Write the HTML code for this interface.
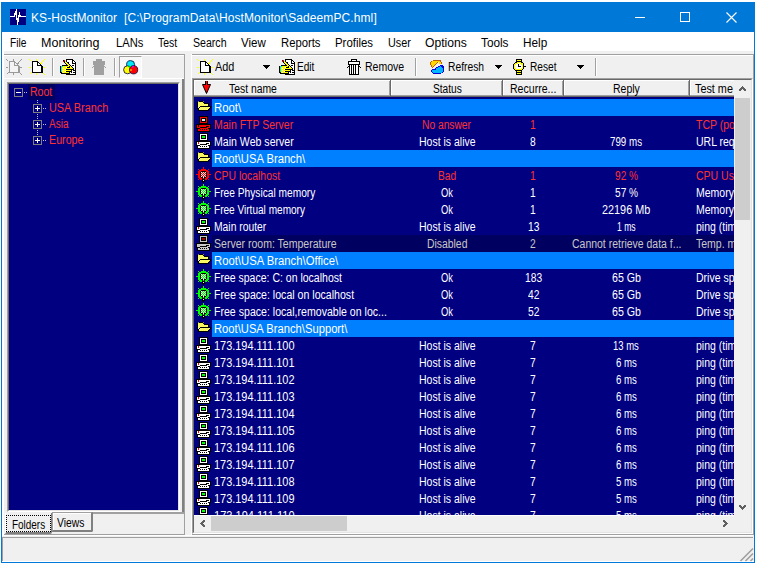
<!DOCTYPE html><html><head><meta charset="utf-8"><style>
*{margin:0;padding:0;box-sizing:border-box}
html,body{width:757px;height:565px;overflow:hidden;background:#fff;font-family:"Liberation Sans",sans-serif;position:relative}
.a{position:absolute}
.tx{position:absolute;white-space:pre;transform-origin:0 0;line-height:1}
svg{position:absolute;display:block}
</style></head><body>
<div class="a" style="left:1px;top:2px;width:754px;height:561px;background:#0078D7;"></div>
<div class="a" style="left:2px;top:32px;width:752px;height:530px;background:#F0F0F0;"></div>
<div class="a" style="left:2px;top:32px;width:752px;height:19px;background:#FFFFFF;"></div>
<svg style="left:10px;top:9px" width="16" height="16" viewBox="0 0 16 16" shape-rendering="crispEdges"><rect width="16" height="16" fill="#000080"/><g fill="#fff"><rect x="0" y="7" width="5" height="1"/><rect x="4" y="4" width="1" height="4"/><rect x="5" y="2" width="1" height="4"/><rect x="6" y="0" width="1" height="11"/><rect x="7" y="9" width="1" height="7"/><rect x="8" y="6" width="1" height="7"/><rect x="9" y="3" width="1" height="5"/><rect x="10" y="6" width="1" height="2"/><rect x="11" y="7" width="5" height="1"/></g></svg>
<div class="tx" style="left:31px;top:12px;font-size:12px;color:#fff;letter-spacing:0.1px">KS-HostMonitor  [C:\ProgramData\HostMonitor\SadeemPC.hml]</div>
<div class="a" style="left:635px;top:17px;width:10px;height:1px;background:#fff;"></div>
<div class="a" style="left:680px;top:12px;width:10px;height:10px;border:1px solid #fff"></div>
<svg style="left:726px;top:12px" width="11" height="11" viewBox="0 0 11 11"><path d="M0.5 0.5L10.5 10.5M10.5 0.5L0.5 10.5" stroke="#fff" stroke-width="1.1"/></svg>
<div class="tx" style="left:10.0px;top:37px;font-size:12px;color:#000;transform:scaleX(0.85);">File</div>
<div class="tx" style="left:41.0px;top:37px;font-size:12px;color:#000;transform:scaleX(1.045);">Monitoring</div>
<div class="tx" style="left:116.0px;top:37px;font-size:12px;color:#000;transform:scaleX(0.931);">LANs</div>
<div class="tx" style="left:158.0px;top:37px;font-size:12px;color:#000;transform:scaleX(0.87);">Test</div>
<div class="tx" style="left:192.5px;top:37px;font-size:12px;color:#000;transform:scaleX(0.882);">Search</div>
<div class="tx" style="left:241.0px;top:37px;font-size:12px;color:#000;transform:scaleX(0.962);">View</div>
<div class="tx" style="left:280.5px;top:37px;font-size:12px;color:#000;transform:scaleX(0.94);">Reports</div>
<div class="tx" style="left:335.0px;top:37px;font-size:12px;color:#000;transform:scaleX(0.95);">Profiles</div>
<div class="tx" style="left:387.5px;top:37px;font-size:12px;color:#000;transform:scaleX(0.9);">User</div>
<div class="tx" style="left:424.5px;top:37px;font-size:12px;color:#000;transform:scaleX(1.012);">Options</div>
<div class="tx" style="left:480.5px;top:37px;font-size:12px;color:#000;transform:scaleX(0.982);">Tools</div>
<div class="tx" style="left:522.5px;top:37px;font-size:12px;color:#000;transform:scaleX(0.98);">Help</div>
<div class="a" style="left:3px;top:51px;width:751px;height:3px;background:#F0F0F0;"></div>
<div class="a" style="left:3px;top:54px;width:182px;height:1px;background:#A0A0A0;"></div>
<div class="a" style="left:3px;top:55px;width:181px;height:1px;background:#FFFFFF;"></div>
<div class="a" style="left:184px;top:54px;width:1px;height:481px;background:#A0A0A0;"></div>
<div class="a" style="left:192px;top:54px;width:562px;height:1px;background:#A0A0A0;"></div>
<div class="a" style="left:192px;top:55px;width:562px;height:1px;background:#FFFFFF;"></div>
<div class="a" style="left:191px;top:54px;width:1px;height:481px;background:#FFFFFF;"></div>
<div class="a" style="left:3px;top:78px;width:181px;height:1px;background:#FFFFFF;"></div>
<div class="a" style="left:182px;top:79px;width:2px;height:435px;background:#808080;"></div>
<div class="a" style="left:92px;top:512px;width:92px;height:2px;background:#A0A0A0;"></div>
<div class="a" style="left:3px;top:534px;width:182px;height:1px;background:#A0A0A0;"></div>
<div class="a" style="left:7px;top:82px;width:173px;height:430px;background:#000080;border-top:1px solid #A0A0A0;border-left:1px solid #A0A0A0;border-right:1px solid #FFF;border-bottom:1px solid #FFF"></div>
<div class="a" style="left:8px;top:83px;width:171px;height:428px;background:#000080;border-top:1px solid #696969;border-left:1px solid #696969;border-right:1px solid #E3E3E3;border-bottom:1px solid #E3E3E3"></div>
<div class="a" style="left:192px;top:78px;width:561px;height:456px;background:#F0F0F0;border-top:1px solid #A0A0A0;border-left:1px solid #A0A0A0;border-right:1px solid #FFF;border-bottom:1px solid #FFF"></div>
<div class="a" style="left:193px;top:79px;width:559px;height:454px;background:#F0F0F0;border-top:1px solid #696969;border-left:1px solid #696969;border-right:1px solid #E3E3E3;border-bottom:1px solid #E3E3E3"></div>
<div class="a" style="left:194px;top:96px;width:540px;height:419px;background:#000080;"></div>
<div class="a" style="left:2px;top:537px;width:751px;height:1px;background:#A0A0A0;"></div>
<div class="a" style="left:2px;top:51px;width:2px;height:484px;background:#FFFFFF;"></div>
<div class="a" style="left:2px;top:535px;width:751px;height:1px;background:#FFFFFF;"></div>
<div class="a" style="left:2px;top:537px;width:1px;height:24px;background:#A0A0A0;"></div>
<div class="a" style="left:2px;top:561px;width:752px;height:1px;background:#FFFFFF;"></div>
<div class="a" style="left:192px;top:534px;width:562px;height:1px;background:#A0A0A0;"></div>
<div class="a" style="left:753px;top:54px;width:1px;height:481px;background:#A0A0A0;"></div>
<svg style="left:6px;top:59px;" width="16" height="16" viewBox="0 0 16 16" shape-rendering="crispEdges"><rect x="0" y="0" width="1" height="1" fill="#9A9A9A"/><rect x="7" y="0" width="1" height="1" fill="#9A9A9A"/><rect x="15" y="0" width="1" height="1" fill="#9A9A9A"/><rect x="1" y="1" width="1" height="1" fill="#9A9A9A"/><rect x="7" y="1" width="1" height="1" fill="#9A9A9A"/><rect x="14" y="1" width="1" height="1" fill="#9A9A9A"/><rect x="3" y="2" width="6" height="1" fill="#9A9A9A"/><rect x="13" y="2" width="1" height="1" fill="#9A9A9A"/><rect x="3" y="3" width="1" height="1" fill="#9A9A9A"/><rect x="4" y="3" width="4" height="1" fill="#F4F4F4"/><rect x="8" y="3" width="2" height="1" fill="#9A9A9A"/><rect x="12" y="3" width="1" height="1" fill="#9A9A9A"/><rect x="3" y="4" width="1" height="1" fill="#9A9A9A"/><rect x="4" y="4" width="4" height="1" fill="#F4F4F4"/><rect x="8" y="4" width="1" height="1" fill="#9A9A9A"/><rect x="9" y="4" width="1" height="1" fill="#F4F4F4"/><rect x="10" y="4" width="1" height="1" fill="#9A9A9A"/><rect x="11" y="4" width="2" height="1" fill="#9A9A9A"/><rect x="3" y="5" width="1" height="1" fill="#9A9A9A"/><rect x="4" y="5" width="4" height="1" fill="#F4F4F4"/><rect x="8" y="5" width="1" height="1" fill="#9A9A9A"/><rect x="9" y="5" width="2" height="1" fill="#F4F4F4"/><rect x="11" y="5" width="1" height="1" fill="#9A9A9A"/><rect x="3" y="6" width="1" height="1" fill="#9A9A9A"/><rect x="4" y="6" width="4" height="1" fill="#F4F4F4"/><rect x="8" y="6" width="5" height="1" fill="#9A9A9A"/><rect x="3" y="7" width="1" height="1" fill="#9A9A9A"/><rect x="4" y="7" width="8" height="1" fill="#F4F4F4"/><rect x="12" y="7" width="2" height="1" fill="#9A9A9A"/><rect x="0" y="8" width="2" height="1" fill="#9A9A9A"/><rect x="3" y="8" width="1" height="1" fill="#9A9A9A"/><rect x="4" y="8" width="8" height="1" fill="#F4F4F4"/><rect x="12" y="8" width="2" height="1" fill="#9A9A9A"/><rect x="14" y="8" width="2" height="1" fill="#9A9A9A"/><rect x="3" y="9" width="1" height="1" fill="#9A9A9A"/><rect x="4" y="9" width="8" height="1" fill="#F4F4F4"/><rect x="12" y="9" width="2" height="1" fill="#9A9A9A"/><rect x="3" y="10" width="1" height="1" fill="#9A9A9A"/><rect x="4" y="10" width="8" height="1" fill="#F4F4F4"/><rect x="12" y="10" width="2" height="1" fill="#9A9A9A"/><rect x="3" y="11" width="1" height="1" fill="#9A9A9A"/><rect x="4" y="11" width="8" height="1" fill="#F4F4F4"/><rect x="12" y="11" width="2" height="1" fill="#9A9A9A"/><rect x="3" y="12" width="1" height="1" fill="#9A9A9A"/><rect x="4" y="12" width="8" height="1" fill="#F4F4F4"/><rect x="12" y="12" width="2" height="1" fill="#9A9A9A"/><rect x="2" y="13" width="1" height="1" fill="#9A9A9A"/><rect x="3" y="13" width="11" height="1" fill="#9A9A9A"/><rect x="1" y="14" width="1" height="1" fill="#9A9A9A"/><rect x="7" y="14" width="1" height="1" fill="#9A9A9A"/><rect x="14" y="14" width="1" height="1" fill="#9A9A9A"/><rect x="7" y="15" width="1" height="1" fill="#9A9A9A"/><rect x="15" y="15" width="1" height="1" fill="#9A9A9A"/></svg>
<svg style="left:29px;top:59px;" width="16" height="16" viewBox="0 0 16 16" shape-rendering="crispEdges"><rect x="0" y="0" width="1" height="1" fill="#FFFF00"/><rect x="7" y="0" width="1" height="1" fill="#FFFF00"/><rect x="15" y="0" width="1" height="1" fill="#FFFF00"/><rect x="1" y="1" width="1" height="1" fill="#FFFF00"/><rect x="7" y="1" width="1" height="1" fill="#FFFF00"/><rect x="14" y="1" width="1" height="1" fill="#FFFF00"/><rect x="3" y="2" width="6" height="1" fill="#000"/><rect x="13" y="2" width="1" height="1" fill="#FFFF00"/><rect x="3" y="3" width="1" height="1" fill="#000"/><rect x="4" y="3" width="4" height="1" fill="#fff"/><rect x="8" y="3" width="2" height="1" fill="#000"/><rect x="12" y="3" width="1" height="1" fill="#FFFF00"/><rect x="3" y="4" width="1" height="1" fill="#000"/><rect x="4" y="4" width="4" height="1" fill="#fff"/><rect x="8" y="4" width="1" height="1" fill="#000"/><rect x="9" y="4" width="1" height="1" fill="#fff"/><rect x="10" y="4" width="1" height="1" fill="#000"/><rect x="11" y="4" width="2" height="1" fill="#FFFF00"/><rect x="3" y="5" width="1" height="1" fill="#000"/><rect x="4" y="5" width="4" height="1" fill="#fff"/><rect x="8" y="5" width="1" height="1" fill="#000"/><rect x="9" y="5" width="2" height="1" fill="#fff"/><rect x="11" y="5" width="1" height="1" fill="#000"/><rect x="3" y="6" width="1" height="1" fill="#000"/><rect x="4" y="6" width="4" height="1" fill="#fff"/><rect x="8" y="6" width="5" height="1" fill="#000"/><rect x="3" y="7" width="1" height="1" fill="#000"/><rect x="4" y="7" width="8" height="1" fill="#fff"/><rect x="12" y="7" width="2" height="1" fill="#000"/><rect x="0" y="8" width="2" height="1" fill="#FFFF00"/><rect x="3" y="8" width="1" height="1" fill="#000"/><rect x="4" y="8" width="8" height="1" fill="#fff"/><rect x="12" y="8" width="2" height="1" fill="#000"/><rect x="14" y="8" width="2" height="1" fill="#FFFF00"/><rect x="3" y="9" width="1" height="1" fill="#000"/><rect x="4" y="9" width="8" height="1" fill="#fff"/><rect x="12" y="9" width="2" height="1" fill="#000"/><rect x="3" y="10" width="1" height="1" fill="#000"/><rect x="4" y="10" width="8" height="1" fill="#fff"/><rect x="12" y="10" width="2" height="1" fill="#000"/><rect x="3" y="11" width="1" height="1" fill="#000"/><rect x="4" y="11" width="8" height="1" fill="#fff"/><rect x="12" y="11" width="2" height="1" fill="#000"/><rect x="3" y="12" width="1" height="1" fill="#000"/><rect x="4" y="12" width="8" height="1" fill="#fff"/><rect x="12" y="12" width="2" height="1" fill="#000"/><rect x="2" y="13" width="1" height="1" fill="#FFFF00"/><rect x="3" y="13" width="11" height="1" fill="#000"/><rect x="1" y="14" width="1" height="1" fill="#FFFF00"/><rect x="7" y="14" width="1" height="1" fill="#FFFF00"/><rect x="14" y="14" width="1" height="1" fill="#FFFF00"/><rect x="7" y="15" width="1" height="1" fill="#FFFF00"/><rect x="15" y="15" width="1" height="1" fill="#FFFF00"/></svg>
<div class="a" style="left:52px;top:58px;width:1px;height:18px;background:#A0A0A0;"></div>
<div class="a" style="left:53px;top:58px;width:1px;height:18px;background:#FFFFFF;"></div>
<svg style="left:60px;top:59px;" width="17" height="16" viewBox="0 0 17 16" shape-rendering="crispEdges"><rect x="6" y="0" width="7" height="1" fill="#000"/><rect x="3" y="1" width="1" height="1" fill="#000"/><rect x="4" y="1" width="1" height="1" fill="#FF0000"/><rect x="6" y="1" width="1" height="1" fill="#000"/><rect x="7" y="1" width="5" height="1" fill="#fff"/><rect x="12" y="1" width="2" height="1" fill="#000"/><rect x="3" y="2" width="1" height="1" fill="#FF0000"/><rect x="4" y="2" width="1" height="1" fill="#000"/><rect x="5" y="2" width="1" height="1" fill="#FFFF00"/><rect x="6" y="2" width="1" height="1" fill="#000"/><rect x="7" y="2" width="5" height="1" fill="#fff"/><rect x="12" y="2" width="1" height="1" fill="#000"/><rect x="13" y="2" width="1" height="1" fill="#fff"/><rect x="14" y="2" width="1" height="1" fill="#000"/><rect x="4" y="3" width="1" height="1" fill="#000"/><rect x="5" y="3" width="2" height="1" fill="#FFFF00"/><rect x="7" y="3" width="2" height="1" fill="#000"/><rect x="9" y="3" width="3" height="1" fill="#fff"/><rect x="12" y="3" width="1" height="1" fill="#000"/><rect x="13" y="3" width="2" height="1" fill="#fff"/><rect x="15" y="3" width="1" height="1" fill="#000"/><rect x="5" y="4" width="1" height="1" fill="#000"/><rect x="6" y="4" width="2" height="1" fill="#FFFF00"/><rect x="8" y="4" width="1" height="1" fill="#000"/><rect x="9" y="4" width="3" height="1" fill="#fff"/><rect x="12" y="4" width="4" height="1" fill="#000"/><rect x="6" y="5" width="1" height="1" fill="#000"/><rect x="7" y="5" width="2" height="1" fill="#FFFF00"/><rect x="9" y="5" width="1" height="1" fill="#000"/><rect x="10" y="5" width="5" height="1" fill="#fff"/><rect x="15" y="5" width="1" height="1" fill="#000"/><rect x="2" y="6" width="6" height="1" fill="#000"/><rect x="8" y="6" width="2" height="1" fill="#FFFF00"/><rect x="10" y="6" width="1" height="1" fill="#000"/><rect x="11" y="6" width="1" height="1" fill="#fff"/><rect x="12" y="6" width="2" height="1" fill="#000"/><rect x="14" y="6" width="1" height="1" fill="#fff"/><rect x="15" y="6" width="1" height="1" fill="#000"/><rect x="0" y="7" width="1" height="1" fill="#000"/><rect x="1" y="7" width="2" height="1" fill="#00E8F0"/><rect x="3" y="7" width="6" height="1" fill="#FFFF00"/><rect x="9" y="7" width="1" height="1" fill="#000"/><rect x="10" y="7" width="1" height="1" fill="#FFFF00"/><rect x="11" y="7" width="1" height="1" fill="#000"/><rect x="12" y="7" width="3" height="1" fill="#fff"/><rect x="15" y="7" width="1" height="1" fill="#000"/><rect x="0" y="8" width="1" height="1" fill="#000"/><rect x="1" y="8" width="1" height="1" fill="#00E8F0"/><rect x="2" y="8" width="4" height="1" fill="#FFFF00"/><rect x="6" y="8" width="1" height="1" fill="#fff"/><rect x="7" y="8" width="3" height="1" fill="#000"/><rect x="10" y="8" width="2" height="1" fill="#FFFF00"/><rect x="12" y="8" width="1" height="1" fill="#000"/><rect x="13" y="8" width="2" height="1" fill="#fff"/><rect x="15" y="8" width="1" height="1" fill="#000"/><rect x="0" y="9" width="1" height="1" fill="#000"/><rect x="1" y="9" width="1" height="1" fill="#00E8F0"/><rect x="2" y="9" width="1" height="1" fill="#FFFF00"/><rect x="3" y="9" width="1" height="1" fill="#fff"/><rect x="4" y="9" width="9" height="1" fill="#FFFF00"/><rect x="13" y="9" width="1" height="1" fill="#000"/><rect x="14" y="9" width="1" height="1" fill="#fff"/><rect x="15" y="9" width="1" height="1" fill="#000"/><rect x="0" y="10" width="1" height="1" fill="#000"/><rect x="1" y="10" width="1" height="1" fill="#00E8F0"/><rect x="2" y="10" width="3" height="1" fill="#FFFF00"/><rect x="5" y="10" width="1" height="1" fill="#fff"/><rect x="6" y="10" width="8" height="1" fill="#000"/><rect x="14" y="10" width="1" height="1" fill="#fff"/><rect x="15" y="10" width="1" height="1" fill="#000"/><rect x="0" y="11" width="1" height="1" fill="#000"/><rect x="1" y="11" width="1" height="1" fill="#00E8F0"/><rect x="2" y="11" width="1" height="1" fill="#FFFF00"/><rect x="3" y="11" width="1" height="1" fill="#fff"/><rect x="4" y="11" width="7" height="1" fill="#FFFF00"/><rect x="11" y="11" width="1" height="1" fill="#000"/><rect x="12" y="11" width="1" height="1" fill="#fff"/><rect x="13" y="11" width="3" height="1" fill="#000"/><rect x="0" y="12" width="1" height="1" fill="#000"/><rect x="1" y="12" width="1" height="1" fill="#00E8F0"/><rect x="2" y="12" width="3" height="1" fill="#FFFF00"/><rect x="5" y="12" width="1" height="1" fill="#fff"/><rect x="6" y="12" width="6" height="1" fill="#000"/><rect x="12" y="12" width="3" height="1" fill="#fff"/><rect x="15" y="12" width="1" height="1" fill="#000"/><rect x="0" y="13" width="2" height="1" fill="#000"/><rect x="2" y="13" width="1" height="1" fill="#FFFF00"/><rect x="3" y="13" width="1" height="1" fill="#fff"/><rect x="4" y="13" width="5" height="1" fill="#FFFF00"/><rect x="9" y="13" width="1" height="1" fill="#000"/><rect x="10" y="13" width="1" height="1" fill="#fff"/><rect x="11" y="13" width="1" height="1" fill="#000"/><rect x="12" y="13" width="1" height="1" fill="#fff"/><rect x="13" y="13" width="3" height="1" fill="#000"/><rect x="1" y="14" width="9" height="1" fill="#000"/><rect x="10" y="14" width="5" height="1" fill="#fff"/><rect x="15" y="14" width="1" height="1" fill="#000"/><rect x="6" y="15" width="10" height="1" fill="#000"/></svg>
<div class="a" style="left:83px;top:58px;width:1px;height:18px;background:#A0A0A0;"></div>
<div class="a" style="left:84px;top:58px;width:1px;height:18px;background:#FFFFFF;"></div>
<svg style="left:92px;top:59px;" width="14" height="16" viewBox="0 0 14 16" shape-rendering="crispEdges"><rect x="4.5" y="0.5" width="5" height="2" fill="#A0A0A0" stroke="#A0A0A0"/><rect x="1.5" y="2.5" width="11" height="3" fill="#A0A0A0" stroke="#A0A0A0"/><rect x="2.5" y="5.5" width="9" height="10" fill="#A0A0A0" stroke="#A0A0A0"/><rect x="4" y="6" width="1" height="9" fill="#A0A0A0"/><rect x="6" y="6" width="1" height="9" fill="#A0A0A0"/><rect x="8" y="6" width="1" height="9" fill="#A0A0A0"/><rect x="0" y="8" width="1" height="1" fill="#A0A0A0"/><rect x="1" y="7" width="1" height="1" fill="#A0A0A0"/><rect x="13" y="8" width="1" height="1" fill="#A0A0A0"/><rect x="12" y="7" width="1" height="1" fill="#A0A0A0"/></svg>
<div class="a" style="left:114px;top:58px;width:1px;height:18px;background:#A0A0A0;"></div>
<div class="a" style="left:115px;top:58px;width:1px;height:18px;background:#FFFFFF;"></div>
<div class="a" style="left:119px;top:56px;width:23px;height:22px;background:#F8F8F8;border-top:1px solid #A0A0A0;border-left:1px solid #A0A0A0;border-right:1px solid #fff;border-bottom:1px solid #fff"></div>
<svg style="left:123px;top:60px;" width="16" height="16" viewBox="0 0 16 16" shape-rendering="crispEdges"><g shape-rendering="auto" stroke="#000040" stroke-width="0.8"><circle cx="7.6" cy="4.6" r="4" fill="#00E8F8"/><circle cx="4.6" cy="9.8" r="4" fill="#FFFF00"/><circle cx="10.6" cy="9.8" r="4.1" fill="#FF0000"/></g><path d="M5 6.5L8 6L7 9Z" fill="#00D000"/><path d="M9 6L11 6.5L9 9Z" fill="#E000E0"/><circle cx="8" cy="10" r="1.6" fill="#FF8000"/></svg>
<svg style="left:197px;top:59px;" width="16" height="16" viewBox="0 0 16 16" shape-rendering="crispEdges"><rect x="0" y="0" width="1" height="1" fill="#FFFF00"/><rect x="7" y="0" width="1" height="1" fill="#FFFF00"/><rect x="15" y="0" width="1" height="1" fill="#FFFF00"/><rect x="1" y="1" width="1" height="1" fill="#FFFF00"/><rect x="7" y="1" width="1" height="1" fill="#FFFF00"/><rect x="14" y="1" width="1" height="1" fill="#FFFF00"/><rect x="3" y="2" width="6" height="1" fill="#000"/><rect x="13" y="2" width="1" height="1" fill="#FFFF00"/><rect x="3" y="3" width="1" height="1" fill="#000"/><rect x="4" y="3" width="4" height="1" fill="#fff"/><rect x="8" y="3" width="2" height="1" fill="#000"/><rect x="12" y="3" width="1" height="1" fill="#FFFF00"/><rect x="3" y="4" width="1" height="1" fill="#000"/><rect x="4" y="4" width="4" height="1" fill="#fff"/><rect x="8" y="4" width="1" height="1" fill="#000"/><rect x="9" y="4" width="1" height="1" fill="#fff"/><rect x="10" y="4" width="1" height="1" fill="#000"/><rect x="11" y="4" width="2" height="1" fill="#FFFF00"/><rect x="3" y="5" width="1" height="1" fill="#000"/><rect x="4" y="5" width="4" height="1" fill="#fff"/><rect x="8" y="5" width="1" height="1" fill="#000"/><rect x="9" y="5" width="2" height="1" fill="#fff"/><rect x="11" y="5" width="1" height="1" fill="#000"/><rect x="3" y="6" width="1" height="1" fill="#000"/><rect x="4" y="6" width="4" height="1" fill="#fff"/><rect x="8" y="6" width="5" height="1" fill="#000"/><rect x="3" y="7" width="1" height="1" fill="#000"/><rect x="4" y="7" width="8" height="1" fill="#fff"/><rect x="12" y="7" width="2" height="1" fill="#000"/><rect x="0" y="8" width="2" height="1" fill="#FFFF00"/><rect x="3" y="8" width="1" height="1" fill="#000"/><rect x="4" y="8" width="8" height="1" fill="#fff"/><rect x="12" y="8" width="2" height="1" fill="#000"/><rect x="14" y="8" width="2" height="1" fill="#FFFF00"/><rect x="3" y="9" width="1" height="1" fill="#000"/><rect x="4" y="9" width="8" height="1" fill="#fff"/><rect x="12" y="9" width="2" height="1" fill="#000"/><rect x="3" y="10" width="1" height="1" fill="#000"/><rect x="4" y="10" width="8" height="1" fill="#fff"/><rect x="12" y="10" width="2" height="1" fill="#000"/><rect x="3" y="11" width="1" height="1" fill="#000"/><rect x="4" y="11" width="8" height="1" fill="#fff"/><rect x="12" y="11" width="2" height="1" fill="#000"/><rect x="3" y="12" width="1" height="1" fill="#000"/><rect x="4" y="12" width="8" height="1" fill="#fff"/><rect x="12" y="12" width="2" height="1" fill="#000"/><rect x="2" y="13" width="1" height="1" fill="#FFFF00"/><rect x="3" y="13" width="11" height="1" fill="#000"/><rect x="1" y="14" width="1" height="1" fill="#FFFF00"/><rect x="7" y="14" width="1" height="1" fill="#FFFF00"/><rect x="14" y="14" width="1" height="1" fill="#FFFF00"/><rect x="7" y="15" width="1" height="1" fill="#FFFF00"/><rect x="15" y="15" width="1" height="1" fill="#FFFF00"/></svg>
<div class="tx" style="left:215.0px;top:61px;font-size:12px;color:#000;transform:scaleX(0.905);">Add</div>
<svg style="left:263px;top:65px" width="7" height="4" viewBox="0 0 7 4" shape-rendering="crispEdges"><rect x="0" y="0" width="7" height="1"/><rect x="1" y="1" width="5" height="1"/><rect x="2" y="2" width="3" height="1"/><rect x="3" y="3" width="1" height="1"/></svg>
<svg style="left:279px;top:59px;" width="17" height="16" viewBox="0 0 17 16" shape-rendering="crispEdges"><rect x="6" y="0" width="7" height="1" fill="#000"/><rect x="3" y="1" width="1" height="1" fill="#000"/><rect x="4" y="1" width="1" height="1" fill="#FF0000"/><rect x="6" y="1" width="1" height="1" fill="#000"/><rect x="7" y="1" width="5" height="1" fill="#fff"/><rect x="12" y="1" width="2" height="1" fill="#000"/><rect x="3" y="2" width="1" height="1" fill="#FF0000"/><rect x="4" y="2" width="1" height="1" fill="#000"/><rect x="5" y="2" width="1" height="1" fill="#FFFF00"/><rect x="6" y="2" width="1" height="1" fill="#000"/><rect x="7" y="2" width="5" height="1" fill="#fff"/><rect x="12" y="2" width="1" height="1" fill="#000"/><rect x="13" y="2" width="1" height="1" fill="#fff"/><rect x="14" y="2" width="1" height="1" fill="#000"/><rect x="4" y="3" width="1" height="1" fill="#000"/><rect x="5" y="3" width="2" height="1" fill="#FFFF00"/><rect x="7" y="3" width="2" height="1" fill="#000"/><rect x="9" y="3" width="3" height="1" fill="#fff"/><rect x="12" y="3" width="1" height="1" fill="#000"/><rect x="13" y="3" width="2" height="1" fill="#fff"/><rect x="15" y="3" width="1" height="1" fill="#000"/><rect x="5" y="4" width="1" height="1" fill="#000"/><rect x="6" y="4" width="2" height="1" fill="#FFFF00"/><rect x="8" y="4" width="1" height="1" fill="#000"/><rect x="9" y="4" width="3" height="1" fill="#fff"/><rect x="12" y="4" width="4" height="1" fill="#000"/><rect x="6" y="5" width="1" height="1" fill="#000"/><rect x="7" y="5" width="2" height="1" fill="#FFFF00"/><rect x="9" y="5" width="1" height="1" fill="#000"/><rect x="10" y="5" width="5" height="1" fill="#fff"/><rect x="15" y="5" width="1" height="1" fill="#000"/><rect x="2" y="6" width="6" height="1" fill="#000"/><rect x="8" y="6" width="2" height="1" fill="#FFFF00"/><rect x="10" y="6" width="1" height="1" fill="#000"/><rect x="11" y="6" width="1" height="1" fill="#fff"/><rect x="12" y="6" width="2" height="1" fill="#000"/><rect x="14" y="6" width="1" height="1" fill="#fff"/><rect x="15" y="6" width="1" height="1" fill="#000"/><rect x="0" y="7" width="1" height="1" fill="#000"/><rect x="1" y="7" width="2" height="1" fill="#00E8F0"/><rect x="3" y="7" width="6" height="1" fill="#FFFF00"/><rect x="9" y="7" width="1" height="1" fill="#000"/><rect x="10" y="7" width="1" height="1" fill="#FFFF00"/><rect x="11" y="7" width="1" height="1" fill="#000"/><rect x="12" y="7" width="3" height="1" fill="#fff"/><rect x="15" y="7" width="1" height="1" fill="#000"/><rect x="0" y="8" width="1" height="1" fill="#000"/><rect x="1" y="8" width="1" height="1" fill="#00E8F0"/><rect x="2" y="8" width="4" height="1" fill="#FFFF00"/><rect x="6" y="8" width="1" height="1" fill="#fff"/><rect x="7" y="8" width="3" height="1" fill="#000"/><rect x="10" y="8" width="2" height="1" fill="#FFFF00"/><rect x="12" y="8" width="1" height="1" fill="#000"/><rect x="13" y="8" width="2" height="1" fill="#fff"/><rect x="15" y="8" width="1" height="1" fill="#000"/><rect x="0" y="9" width="1" height="1" fill="#000"/><rect x="1" y="9" width="1" height="1" fill="#00E8F0"/><rect x="2" y="9" width="1" height="1" fill="#FFFF00"/><rect x="3" y="9" width="1" height="1" fill="#fff"/><rect x="4" y="9" width="9" height="1" fill="#FFFF00"/><rect x="13" y="9" width="1" height="1" fill="#000"/><rect x="14" y="9" width="1" height="1" fill="#fff"/><rect x="15" y="9" width="1" height="1" fill="#000"/><rect x="0" y="10" width="1" height="1" fill="#000"/><rect x="1" y="10" width="1" height="1" fill="#00E8F0"/><rect x="2" y="10" width="3" height="1" fill="#FFFF00"/><rect x="5" y="10" width="1" height="1" fill="#fff"/><rect x="6" y="10" width="8" height="1" fill="#000"/><rect x="14" y="10" width="1" height="1" fill="#fff"/><rect x="15" y="10" width="1" height="1" fill="#000"/><rect x="0" y="11" width="1" height="1" fill="#000"/><rect x="1" y="11" width="1" height="1" fill="#00E8F0"/><rect x="2" y="11" width="1" height="1" fill="#FFFF00"/><rect x="3" y="11" width="1" height="1" fill="#fff"/><rect x="4" y="11" width="7" height="1" fill="#FFFF00"/><rect x="11" y="11" width="1" height="1" fill="#000"/><rect x="12" y="11" width="1" height="1" fill="#fff"/><rect x="13" y="11" width="3" height="1" fill="#000"/><rect x="0" y="12" width="1" height="1" fill="#000"/><rect x="1" y="12" width="1" height="1" fill="#00E8F0"/><rect x="2" y="12" width="3" height="1" fill="#FFFF00"/><rect x="5" y="12" width="1" height="1" fill="#fff"/><rect x="6" y="12" width="6" height="1" fill="#000"/><rect x="12" y="12" width="3" height="1" fill="#fff"/><rect x="15" y="12" width="1" height="1" fill="#000"/><rect x="0" y="13" width="2" height="1" fill="#000"/><rect x="2" y="13" width="1" height="1" fill="#FFFF00"/><rect x="3" y="13" width="1" height="1" fill="#fff"/><rect x="4" y="13" width="5" height="1" fill="#FFFF00"/><rect x="9" y="13" width="1" height="1" fill="#000"/><rect x="10" y="13" width="1" height="1" fill="#fff"/><rect x="11" y="13" width="1" height="1" fill="#000"/><rect x="12" y="13" width="1" height="1" fill="#fff"/><rect x="13" y="13" width="3" height="1" fill="#000"/><rect x="1" y="14" width="9" height="1" fill="#000"/><rect x="10" y="14" width="5" height="1" fill="#fff"/><rect x="15" y="14" width="1" height="1" fill="#000"/><rect x="6" y="15" width="10" height="1" fill="#000"/></svg>
<div class="tx" style="left:297.3px;top:61px;font-size:12px;color:#000;transform:scaleX(0.843);">Edit</div>
<svg style="left:347px;top:59px;" width="14" height="16" viewBox="0 0 14 16" shape-rendering="crispEdges"><rect x="4.5" y="0.5" width="5" height="2" fill="#fff" stroke="#000"/><rect x="1.5" y="2.5" width="11" height="3" fill="#fff" stroke="#000"/><rect x="2.5" y="5.5" width="9" height="10" fill="#fff" stroke="#000"/><rect x="4" y="6" width="1" height="9" fill="#000"/><rect x="6" y="6" width="1" height="9" fill="#000"/><rect x="8" y="6" width="1" height="9" fill="#000"/><rect x="0" y="8" width="1" height="1" fill="#000"/><rect x="1" y="7" width="1" height="1" fill="#000"/><rect x="13" y="8" width="1" height="1" fill="#000"/><rect x="12" y="7" width="1" height="1" fill="#000"/></svg>
<div class="tx" style="left:364.5px;top:61px;font-size:12px;color:#000;transform:scaleX(0.878);">Remove</div>
<div class="a" style="left:415px;top:58px;width:1px;height:18px;background:#A0A0A0;"></div>
<div class="a" style="left:416px;top:58px;width:1px;height:18px;background:#FFFFFF;"></div>
<svg style="left:430px;top:59px;" width="15" height="15" viewBox="0 0 15 15" shape-rendering="crispEdges"><rect x="3" y="1" width="8" height="1" fill="#C06000"/><rect x="1" y="2" width="1" height="1" fill="#C06000"/><rect x="2" y="2" width="8" height="1" fill="#FFD800"/><rect x="10" y="2" width="1" height="1" fill="#C06000"/><rect x="0" y="3" width="1" height="1" fill="#C06000"/><rect x="1" y="3" width="6" height="1" fill="#FFD800"/><rect x="7" y="3" width="1" height="1" fill="#C06000"/><rect x="9" y="3" width="2" height="1" fill="#FFD800"/><rect x="11" y="3" width="1" height="1" fill="#C06000"/><rect x="0" y="4" width="1" height="1" fill="#C06000"/><rect x="1" y="4" width="5" height="1" fill="#FFD800"/><rect x="6" y="4" width="1" height="1" fill="#C06000"/><rect x="9" y="4" width="2" height="1" fill="#FFD800"/><rect x="11" y="4" width="1" height="1" fill="#C06000"/><rect x="0" y="5" width="1" height="1" fill="#C06000"/><rect x="1" y="5" width="4" height="1" fill="#FFD800"/><rect x="5" y="5" width="1" height="1" fill="#C06000"/><rect x="1" y="6" width="1" height="1" fill="#C06000"/><rect x="2" y="6" width="2" height="1" fill="#FFD800"/><rect x="4" y="6" width="1" height="1" fill="#C06000"/><rect x="10" y="6" width="3" height="1" fill="#0000E0"/><rect x="1" y="7" width="1" height="1" fill="#C06000"/><rect x="2" y="7" width="1" height="1" fill="#FFD800"/><rect x="3" y="7" width="1" height="1" fill="#C06000"/><rect x="8" y="7" width="2" height="1" fill="#0000E0"/><rect x="10" y="7" width="1" height="1" fill="#00B8FF"/><rect x="11" y="7" width="3" height="1" fill="#0000E0"/><rect x="2" y="8" width="1" height="1" fill="#C06000"/><rect x="6" y="8" width="2" height="1" fill="#0000E0"/><rect x="8" y="8" width="4" height="1" fill="#00B8FF"/><rect x="12" y="8" width="2" height="1" fill="#0000E0"/><rect x="5" y="9" width="1" height="1" fill="#0000E0"/><rect x="6" y="9" width="7" height="1" fill="#00B8FF"/><rect x="13" y="9" width="1" height="1" fill="#0000E0"/><rect x="2" y="10" width="4" height="1" fill="#0000E0"/><rect x="6" y="10" width="7" height="1" fill="#00B8FF"/><rect x="13" y="10" width="1" height="1" fill="#0000E0"/><rect x="1" y="11" width="1" height="1" fill="#0000E0"/><rect x="2" y="11" width="11" height="1" fill="#00B8FF"/><rect x="13" y="11" width="1" height="1" fill="#0000E0"/><rect x="1" y="12" width="1" height="1" fill="#0000E0"/><rect x="2" y="12" width="11" height="1" fill="#00B8FF"/><rect x="13" y="12" width="1" height="1" fill="#0000E0"/><rect x="2" y="13" width="1" height="1" fill="#0000E0"/><rect x="3" y="13" width="9" height="1" fill="#00B8FF"/><rect x="12" y="13" width="1" height="1" fill="#0000E0"/><rect x="3" y="14" width="8" height="1" fill="#0000E0"/></svg>
<div class="tx" style="left:448.0px;top:61px;font-size:12px;color:#000;transform:scaleX(0.857);">Refresh</div>
<svg style="left:495px;top:65px" width="7" height="4" viewBox="0 0 7 4" shape-rendering="crispEdges"><rect x="0" y="0" width="7" height="1"/><rect x="1" y="1" width="5" height="1"/><rect x="2" y="2" width="3" height="1"/><rect x="3" y="3" width="1" height="1"/></svg>
<svg style="left:513px;top:59px;" width="13" height="16" viewBox="0 0 13 16" shape-rendering="crispEdges"><rect x="3" y="0" width="6" height="1" fill="#000"/><rect x="3" y="1" width="1" height="1" fill="#000"/><rect x="4" y="1" width="4" height="1" fill="#FFFF00"/><rect x="8" y="1" width="1" height="1" fill="#000"/><rect x="3" y="2" width="6" height="1" fill="#000"/><rect x="2" y="3" width="2" height="1" fill="#000"/><rect x="4" y="3" width="4" height="1" fill="#FFFF00"/><rect x="8" y="3" width="2" height="1" fill="#000"/><rect x="1" y="4" width="1" height="1" fill="#000"/><rect x="2" y="4" width="3" height="1" fill="#FFFF00"/><rect x="5" y="4" width="2" height="1" fill="#fff"/><rect x="7" y="4" width="3" height="1" fill="#FFFF00"/><rect x="10" y="4" width="1" height="1" fill="#000"/><rect x="0" y="5" width="1" height="1" fill="#000"/><rect x="1" y="5" width="2" height="1" fill="#FFFF00"/><rect x="3" y="5" width="2" height="1" fill="#fff"/><rect x="5" y="5" width="1" height="1" fill="#000"/><rect x="6" y="5" width="2" height="1" fill="#fff"/><rect x="8" y="5" width="2" height="1" fill="#FFFF00"/><rect x="10" y="5" width="1" height="1" fill="#000"/><rect x="0" y="6" width="1" height="1" fill="#000"/><rect x="1" y="6" width="1" height="1" fill="#FFFF00"/><rect x="2" y="6" width="3" height="1" fill="#fff"/><rect x="5" y="6" width="1" height="1" fill="#000"/><rect x="6" y="6" width="3" height="1" fill="#fff"/><rect x="9" y="6" width="1" height="1" fill="#FFFF00"/><rect x="10" y="6" width="1" height="1" fill="#000"/><rect x="0" y="7" width="1" height="1" fill="#000"/><rect x="1" y="7" width="1" height="1" fill="#FFFF00"/><rect x="2" y="7" width="3" height="1" fill="#fff"/><rect x="5" y="7" width="3" height="1" fill="#000"/><rect x="8" y="7" width="1" height="1" fill="#fff"/><rect x="9" y="7" width="1" height="1" fill="#FFFF00"/><rect x="10" y="7" width="3" height="1" fill="#000"/><rect x="0" y="8" width="1" height="1" fill="#000"/><rect x="1" y="8" width="1" height="1" fill="#FFFF00"/><rect x="2" y="8" width="7" height="1" fill="#fff"/><rect x="9" y="8" width="1" height="1" fill="#FFFF00"/><rect x="10" y="8" width="1" height="1" fill="#000"/><rect x="0" y="9" width="1" height="1" fill="#000"/><rect x="1" y="9" width="2" height="1" fill="#FFFF00"/><rect x="3" y="9" width="5" height="1" fill="#fff"/><rect x="8" y="9" width="2" height="1" fill="#FFFF00"/><rect x="10" y="9" width="1" height="1" fill="#000"/><rect x="1" y="10" width="1" height="1" fill="#000"/><rect x="2" y="10" width="7" height="1" fill="#FFFF00"/><rect x="9" y="10" width="1" height="1" fill="#000"/><rect x="2" y="11" width="7" height="1" fill="#000"/><rect x="3" y="12" width="1" height="1" fill="#000"/><rect x="4" y="12" width="4" height="1" fill="#FFFF00"/><rect x="8" y="12" width="1" height="1" fill="#000"/><rect x="3" y="13" width="6" height="1" fill="#000"/><rect x="3" y="14" width="1" height="1" fill="#000"/><rect x="4" y="14" width="4" height="1" fill="#FFFF00"/><rect x="8" y="14" width="1" height="1" fill="#000"/><rect x="3" y="15" width="6" height="1" fill="#000"/></svg>
<div class="tx" style="left:530.0px;top:61px;font-size:12px;color:#000;transform:scaleX(0.844);">Reset</div>
<svg style="left:577px;top:65px" width="7" height="4" viewBox="0 0 7 4" shape-rendering="crispEdges"><rect x="0" y="0" width="7" height="1"/><rect x="1" y="1" width="5" height="1"/><rect x="2" y="2" width="3" height="1"/><rect x="3" y="3" width="1" height="1"/></svg>
<div class="a" style="left:595px;top:58px;width:1px;height:18px;background:#A0A0A0;"></div>
<div class="a" style="left:596px;top:58px;width:1px;height:18px;background:#FFFFFF;"></div>
<div class="a" style="left:28px;top:84px;width:27px;height:16px;background:#000060;"></div>
<svg style="left:14px;top:88px;" width="9" height="9" viewBox="0 0 9 9" shape-rendering="crispEdges"><rect x="0.5" y="0.5" width="8" height="8" fill="none" stroke="#808080"/><rect x="2" y="4" width="5" height="1" fill="#fff"/></svg>
<svg style="left:24px;top:92px;" width="4" height="1" viewBox="0 0 4 1" shape-rendering="crispEdges"><rect x="0" y="0" width="1" height="1" fill="#C0C0C0"/><rect x="2" y="0" width="1" height="1" fill="#C0C0C0"/></svg>
<div class="tx" style="left:29.8px;top:86px;font-size:12.5px;color:#FF3232;transform:scaleX(0.844);">Root</div>
<svg style="left:37px;top:100px;" width="1" height="40" viewBox="0 0 1 40" shape-rendering="crispEdges"><rect x="0" y="0" width="1" height="1" fill="#C0C0C0"/><rect x="0" y="2" width="1" height="1" fill="#C0C0C0"/><rect x="0" y="4" width="1" height="1" fill="#C0C0C0"/><rect x="0" y="6" width="1" height="1" fill="#C0C0C0"/><rect x="0" y="8" width="1" height="1" fill="#C0C0C0"/><rect x="0" y="10" width="1" height="1" fill="#C0C0C0"/><rect x="0" y="12" width="1" height="1" fill="#C0C0C0"/><rect x="0" y="14" width="1" height="1" fill="#C0C0C0"/><rect x="0" y="16" width="1" height="1" fill="#C0C0C0"/><rect x="0" y="18" width="1" height="1" fill="#C0C0C0"/><rect x="0" y="20" width="1" height="1" fill="#C0C0C0"/><rect x="0" y="22" width="1" height="1" fill="#C0C0C0"/><rect x="0" y="24" width="1" height="1" fill="#C0C0C0"/><rect x="0" y="26" width="1" height="1" fill="#C0C0C0"/><rect x="0" y="28" width="1" height="1" fill="#C0C0C0"/><rect x="0" y="30" width="1" height="1" fill="#C0C0C0"/><rect x="0" y="32" width="1" height="1" fill="#C0C0C0"/><rect x="0" y="34" width="1" height="1" fill="#C0C0C0"/><rect x="0" y="36" width="1" height="1" fill="#C0C0C0"/><rect x="0" y="38" width="1" height="1" fill="#C0C0C0"/><rect x="0" y="40" width="1" height="1" fill="#C0C0C0"/><rect x="0" y="42" width="1" height="1" fill="#C0C0C0"/><rect x="0" y="44" width="1" height="1" fill="#C0C0C0"/><rect x="0" y="46" width="1" height="1" fill="#C0C0C0"/><rect x="0" y="48" width="1" height="1" fill="#C0C0C0"/><rect x="0" y="50" width="1" height="1" fill="#C0C0C0"/></svg>
<svg style="left:33px;top:104px;" width="9" height="9" viewBox="0 0 9 9" shape-rendering="crispEdges"><rect x="0.5" y="0.5" width="8" height="8" fill="none" stroke="#808080"/><rect x="2" y="4" width="5" height="1" fill="#fff"/><rect x="4" y="2" width="1" height="5" fill="#fff"/></svg>
<svg style="left:43px;top:108px;" width="4" height="1" viewBox="0 0 4 1" shape-rendering="crispEdges"><rect x="0" y="0" width="1" height="1" fill="#C0C0C0"/><rect x="2" y="0" width="1" height="1" fill="#C0C0C0"/></svg>
<div class="tx" style="left:48.6px;top:102px;font-size:12.5px;color:#FF3232;transform:scaleX(0.871);">USA Branch</div>
<svg style="left:33px;top:120px;" width="9" height="9" viewBox="0 0 9 9" shape-rendering="crispEdges"><rect x="0.5" y="0.5" width="8" height="8" fill="none" stroke="#808080"/><rect x="2" y="4" width="5" height="1" fill="#fff"/><rect x="4" y="2" width="1" height="5" fill="#fff"/></svg>
<svg style="left:43px;top:124px;" width="4" height="1" viewBox="0 0 4 1" shape-rendering="crispEdges"><rect x="0" y="0" width="1" height="1" fill="#C0C0C0"/><rect x="2" y="0" width="1" height="1" fill="#C0C0C0"/></svg>
<div class="tx" style="left:48.6px;top:118px;font-size:12.5px;color:#FF3232;transform:scaleX(0.8);">Asia</div>
<svg style="left:33px;top:136px;" width="9" height="9" viewBox="0 0 9 9" shape-rendering="crispEdges"><rect x="0.5" y="0.5" width="8" height="8" fill="none" stroke="#808080"/><rect x="2" y="4" width="5" height="1" fill="#fff"/><rect x="4" y="2" width="1" height="5" fill="#fff"/></svg>
<svg style="left:43px;top:140px;" width="4" height="1" viewBox="0 0 4 1" shape-rendering="crispEdges"><rect x="0" y="0" width="1" height="1" fill="#C0C0C0"/><rect x="2" y="0" width="1" height="1" fill="#C0C0C0"/></svg>
<div class="tx" style="left:48.6px;top:134px;font-size:12.5px;color:#FF3232;transform:scaleX(0.855);">Europe</div>
<div class="a" style="left:52px;top:512px;width:41px;height:20px;background:#F0F0F0;border-top:1px solid #A0A0A0;border-left:1px solid #A0A0A0;border-right:2px solid #808080;border-bottom:2px solid #808080;border-bottom-right-radius:2px"></div>
<div class="a" style="left:53px;top:513px;width:1px;height:17px;background:#FFFFFF;"></div>
<div class="a" style="left:53px;top:513px;width:38px;height:1px;background:#FFFFFF;"></div>
<div class="a" style="left:5px;top:513px;width:47px;height:21px;background:#F0F0F0;border-left:1px solid #fff;border-right:1px solid #808080;border-bottom:2px solid #808080;border-bottom-right-radius:2px"></div>
<svg style="left:6px;top:515px;" width="45" height="17" viewBox="0 0 45 17" shape-rendering="crispEdges"><rect x="0" y="0" width="1" height="1"/><rect x="0" y="16" width="1" height="1"/><rect x="2" y="0" width="1" height="1"/><rect x="2" y="16" width="1" height="1"/><rect x="4" y="0" width="1" height="1"/><rect x="4" y="16" width="1" height="1"/><rect x="6" y="0" width="1" height="1"/><rect x="6" y="16" width="1" height="1"/><rect x="8" y="0" width="1" height="1"/><rect x="8" y="16" width="1" height="1"/><rect x="10" y="0" width="1" height="1"/><rect x="10" y="16" width="1" height="1"/><rect x="12" y="0" width="1" height="1"/><rect x="12" y="16" width="1" height="1"/><rect x="14" y="0" width="1" height="1"/><rect x="14" y="16" width="1" height="1"/><rect x="16" y="0" width="1" height="1"/><rect x="16" y="16" width="1" height="1"/><rect x="18" y="0" width="1" height="1"/><rect x="18" y="16" width="1" height="1"/><rect x="20" y="0" width="1" height="1"/><rect x="20" y="16" width="1" height="1"/><rect x="22" y="0" width="1" height="1"/><rect x="22" y="16" width="1" height="1"/><rect x="24" y="0" width="1" height="1"/><rect x="24" y="16" width="1" height="1"/><rect x="26" y="0" width="1" height="1"/><rect x="26" y="16" width="1" height="1"/><rect x="28" y="0" width="1" height="1"/><rect x="28" y="16" width="1" height="1"/><rect x="30" y="0" width="1" height="1"/><rect x="30" y="16" width="1" height="1"/><rect x="32" y="0" width="1" height="1"/><rect x="32" y="16" width="1" height="1"/><rect x="34" y="0" width="1" height="1"/><rect x="34" y="16" width="1" height="1"/><rect x="36" y="0" width="1" height="1"/><rect x="36" y="16" width="1" height="1"/><rect x="38" y="0" width="1" height="1"/><rect x="38" y="16" width="1" height="1"/><rect x="40" y="0" width="1" height="1"/><rect x="40" y="16" width="1" height="1"/><rect x="42" y="0" width="1" height="1"/><rect x="42" y="16" width="1" height="1"/><rect x="44" y="0" width="1" height="1"/><rect x="44" y="16" width="1" height="1"/><rect x="0" y="0" width="1" height="1"/><rect x="44" y="0" width="1" height="1"/><rect x="0" y="2" width="1" height="1"/><rect x="44" y="2" width="1" height="1"/><rect x="0" y="4" width="1" height="1"/><rect x="44" y="4" width="1" height="1"/><rect x="0" y="6" width="1" height="1"/><rect x="44" y="6" width="1" height="1"/><rect x="0" y="8" width="1" height="1"/><rect x="44" y="8" width="1" height="1"/><rect x="0" y="10" width="1" height="1"/><rect x="44" y="10" width="1" height="1"/><rect x="0" y="12" width="1" height="1"/><rect x="44" y="12" width="1" height="1"/><rect x="0" y="14" width="1" height="1"/><rect x="44" y="14" width="1" height="1"/><rect x="0" y="16" width="1" height="1"/><rect x="44" y="16" width="1" height="1"/></svg>
<div class="tx" style="left:11.6px;top:518.5px;font-size:12.5px;color:#000;transform:scaleX(0.795);">Folders</div>
<div class="tx" style="left:57.0px;top:516.5px;font-size:12.5px;color:#000;transform:scaleX(0.824);">Views</div>
<div class="a" style="left:194px;top:80px;width:540px;height:17px;background:#F0F0F0;"></div>
<div class="a" style="left:194px;top:96px;width:540px;height:1px;background:#696969;"></div>
<div class="a" style="left:194px;top:80px;width:540px;height:1px;background:#FFFFFF;"></div>
<div class="a" style="left:194px;top:80px;width:1px;height:15px;background:#FFFFFF;"></div>
<div class="a" style="left:194px;top:95px;width:540px;height:1px;background:#A0A0A0;"></div>
<div class="a" style="left:389px;top:81px;width:1px;height:15px;background:#A0A0A0;"></div>
<div class="a" style="left:390px;top:80px;width:1px;height:17px;background:#696969;"></div>
<div class="a" style="left:391px;top:80px;width:1px;height:15px;background:#FFFFFF;"></div>
<div class="a" style="left:501px;top:81px;width:1px;height:15px;background:#A0A0A0;"></div>
<div class="a" style="left:502px;top:80px;width:1px;height:17px;background:#696969;"></div>
<div class="a" style="left:503px;top:80px;width:1px;height:15px;background:#FFFFFF;"></div>
<div class="a" style="left:562px;top:81px;width:1px;height:15px;background:#A0A0A0;"></div>
<div class="a" style="left:563px;top:80px;width:1px;height:17px;background:#696969;"></div>
<div class="a" style="left:564px;top:80px;width:1px;height:15px;background:#FFFFFF;"></div>
<div class="a" style="left:688px;top:81px;width:1px;height:15px;background:#A0A0A0;"></div>
<div class="a" style="left:689px;top:80px;width:1px;height:17px;background:#696969;"></div>
<div class="a" style="left:690px;top:80px;width:1px;height:15px;background:#FFFFFF;"></div>
<svg style="left:202px;top:81px;" width="10" height="13" viewBox="0 0 10 13" shape-rendering="crispEdges"><path d="M4.5 0.5V3.5H0.5L4.5 12.5L8.5 3.5H4.5" fill="#FF0000" stroke="#000" shape-rendering="auto"/><rect x="3" y="0" width="3" height="4" fill="#FF0000"/><path d="M3.5 0V3.5M5.5 0V3.5" stroke="#000" stroke-width="1"/></svg>
<div class="tx" style="left:229.4px;top:83px;font-size:12.5px;color:#000;transform:scaleX(0.829);">Test name</div>
<div class="tx" style="left:432.7px;top:83px;font-size:12.5px;color:#000;transform:scaleX(0.814);">Status</div>
<div class="tx" style="left:509.6px;top:83px;font-size:12.5px;color:#000;transform:scaleX(0.844);">Recurre...</div>
<div class="tx" style="left:613.0px;top:83px;font-size:12.5px;color:#000;transform:scaleX(0.839);">Reply</div>
<div class="tx" style="left:695.3px;top:83px;font-size:12.5px;color:#000;transform:scaleX(0.866);">Test me</div>
<div class="a" style="left:212px;top:99px;width:522px;height:17px;background:#0080FF;"></div>
<svg style="left:197px;top:101px;" width="15" height="10" viewBox="0 0 15 10" shape-rendering="crispEdges"><rect x="1" y="0" width="1" height="1" fill="#808080"/><rect x="2" y="0" width="4" height="1" fill="#000"/><rect x="6" y="0" width="1" height="1" fill="#808080"/><rect x="0" y="1" width="1" height="1" fill="#000"/><rect x="1" y="1" width="1" height="1" fill="#FFFF00"/><rect x="2" y="1" width="1" height="1" fill="#F0F0C8"/><rect x="3" y="1" width="1" height="1" fill="#FFFF00"/><rect x="4" y="1" width="1" height="1" fill="#F0F0C8"/><rect x="5" y="1" width="1" height="1" fill="#FFFF00"/><rect x="6" y="1" width="1" height="1" fill="#000"/><rect x="0" y="2" width="1" height="1" fill="#000"/><rect x="1" y="2" width="1" height="1" fill="#F0F0C8"/><rect x="2" y="2" width="1" height="1" fill="#FFFF00"/><rect x="3" y="2" width="1" height="1" fill="#F0F0C8"/><rect x="4" y="2" width="1" height="1" fill="#FFFF00"/><rect x="5" y="2" width="1" height="1" fill="#F0F0C8"/><rect x="6" y="2" width="1" height="1" fill="#FFFF00"/><rect x="7" y="2" width="5" height="1" fill="#000"/><rect x="0" y="3" width="1" height="1" fill="#000"/><rect x="1" y="3" width="1" height="1" fill="#FFFF00"/><rect x="2" y="3" width="1" height="1" fill="#F0F0C8"/><rect x="3" y="3" width="1" height="1" fill="#FFFF00"/><rect x="4" y="3" width="1" height="1" fill="#F0F0C8"/><rect x="5" y="3" width="1" height="1" fill="#FFFF00"/><rect x="6" y="3" width="1" height="1" fill="#F0F0C8"/><rect x="7" y="3" width="1" height="1" fill="#FFFF00"/><rect x="8" y="3" width="1" height="1" fill="#F0F0C8"/><rect x="9" y="3" width="1" height="1" fill="#FFFF00"/><rect x="10" y="3" width="1" height="1" fill="#F0F0C8"/><rect x="11" y="3" width="1" height="1" fill="#000"/><rect x="0" y="4" width="1" height="1" fill="#000"/><rect x="1" y="4" width="1" height="1" fill="#F0F0C8"/><rect x="2" y="4" width="1" height="1" fill="#FFFF00"/><rect x="3" y="4" width="1" height="1" fill="#F0F0C8"/><rect x="4" y="4" width="1" height="1" fill="#FFFF00"/><rect x="5" y="4" width="1" height="1" fill="#F0F0C8"/><rect x="6" y="4" width="1" height="1" fill="#FFFF00"/><rect x="7" y="4" width="1" height="1" fill="#F0F0C8"/><rect x="8" y="4" width="1" height="1" fill="#FFFF00"/><rect x="9" y="4" width="1" height="1" fill="#F0F0C8"/><rect x="10" y="4" width="1" height="1" fill="#FFFF00"/><rect x="11" y="4" width="1" height="1" fill="#000"/><rect x="0" y="5" width="1" height="1" fill="#000"/><rect x="1" y="5" width="1" height="1" fill="#FFFF00"/><rect x="2" y="5" width="1" height="1" fill="#F0F0C8"/><rect x="3" y="5" width="11" height="1" fill="#000"/><rect x="0" y="6" width="1" height="1" fill="#000"/><rect x="1" y="6" width="1" height="1" fill="#F0F0C8"/><rect x="2" y="6" width="1" height="1" fill="#000"/><rect x="3" y="6" width="1" height="1" fill="#F0F0C8"/><rect x="4" y="6" width="1" height="1" fill="#FFFF00"/><rect x="5" y="6" width="1" height="1" fill="#F0F0C8"/><rect x="6" y="6" width="1" height="1" fill="#FFFF00"/><rect x="7" y="6" width="1" height="1" fill="#F0F0C8"/><rect x="8" y="6" width="1" height="1" fill="#FFFF00"/><rect x="9" y="6" width="1" height="1" fill="#F0F0C8"/><rect x="10" y="6" width="1" height="1" fill="#FFFF00"/><rect x="11" y="6" width="1" height="1" fill="#F0F0C8"/><rect x="12" y="6" width="1" height="1" fill="#FFFF00"/><rect x="13" y="6" width="1" height="1" fill="#000"/><rect x="0" y="7" width="2" height="1" fill="#000"/><rect x="2" y="7" width="1" height="1" fill="#F0F0C8"/><rect x="3" y="7" width="1" height="1" fill="#FFFF00"/><rect x="4" y="7" width="1" height="1" fill="#F0F0C8"/><rect x="5" y="7" width="1" height="1" fill="#FFFF00"/><rect x="6" y="7" width="1" height="1" fill="#F0F0C8"/><rect x="7" y="7" width="1" height="1" fill="#FFFF00"/><rect x="8" y="7" width="1" height="1" fill="#F0F0C8"/><rect x="9" y="7" width="1" height="1" fill="#FFFF00"/><rect x="10" y="7" width="1" height="1" fill="#F0F0C8"/><rect x="11" y="7" width="1" height="1" fill="#FFFF00"/><rect x="12" y="7" width="1" height="1" fill="#000"/><rect x="1" y="8" width="1" height="1" fill="#000"/><rect x="2" y="8" width="1" height="1" fill="#FFFF00"/><rect x="3" y="8" width="1" height="1" fill="#F0F0C8"/><rect x="4" y="8" width="1" height="1" fill="#FFFF00"/><rect x="5" y="8" width="1" height="1" fill="#F0F0C8"/><rect x="6" y="8" width="1" height="1" fill="#FFFF00"/><rect x="7" y="8" width="1" height="1" fill="#F0F0C8"/><rect x="8" y="8" width="1" height="1" fill="#FFFF00"/><rect x="9" y="8" width="1" height="1" fill="#F0F0C8"/><rect x="10" y="8" width="1" height="1" fill="#FFFF00"/><rect x="11" y="8" width="1" height="1" fill="#000"/><rect x="1" y="9" width="11" height="1" fill="#000"/></svg>
<div class="tx" style="left:214.4px;top:102px;font-size:12.5px;color:#FFFFFF;transform:scaleX(0.91);">Root\</div>
<svg style="left:195px;top:116px;" width="16" height="16" viewBox="0 0 16 16" shape-rendering="crispEdges"><rect x="4" y="0" width="9" height="1" fill="#000"/><rect x="4" y="1" width="1" height="1" fill="#000"/><rect x="5" y="1" width="7" height="1" fill="#FF0000"/><rect x="12" y="1" width="1" height="1" fill="#000"/><rect x="4" y="2" width="1" height="1" fill="#000"/><rect x="5" y="2" width="1" height="1" fill="#FF0000"/><rect x="6" y="2" width="5" height="1" fill="#000"/><rect x="11" y="2" width="1" height="1" fill="#FF0000"/><rect x="12" y="2" width="1" height="1" fill="#000"/><rect x="4" y="3" width="1" height="1" fill="#000"/><rect x="5" y="3" width="1" height="1" fill="#FF0000"/><rect x="6" y="3" width="1" height="1" fill="#000"/><rect x="7" y="3" width="3" height="1" fill="#F0F0F0"/><rect x="10" y="3" width="1" height="1" fill="#000"/><rect x="11" y="3" width="1" height="1" fill="#FF0000"/><rect x="12" y="3" width="1" height="1" fill="#000"/><rect x="4" y="4" width="1" height="1" fill="#000"/><rect x="5" y="4" width="1" height="1" fill="#FF0000"/><rect x="6" y="4" width="1" height="1" fill="#000"/><rect x="7" y="4" width="3" height="1" fill="#F0F0F0"/><rect x="10" y="4" width="1" height="1" fill="#000"/><rect x="11" y="4" width="1" height="1" fill="#FF0000"/><rect x="12" y="4" width="1" height="1" fill="#000"/><rect x="4" y="5" width="1" height="1" fill="#000"/><rect x="5" y="5" width="1" height="1" fill="#FF0000"/><rect x="6" y="5" width="5" height="1" fill="#000"/><rect x="11" y="5" width="1" height="1" fill="#FF0000"/><rect x="12" y="5" width="1" height="1" fill="#000"/><rect x="4" y="6" width="1" height="1" fill="#000"/><rect x="5" y="6" width="7" height="1" fill="#FF0000"/><rect x="12" y="6" width="1" height="1" fill="#000"/><rect x="4" y="7" width="9" height="1" fill="#000"/><rect x="1" y="8" width="15" height="1" fill="#000"/><rect x="1" y="9" width="1" height="1" fill="#000"/><rect x="2" y="9" width="1" height="1" fill="#FF0000"/><rect x="3" y="9" width="1" height="1" fill="#000000"/><rect x="4" y="9" width="11" height="1" fill="#FF0000"/><rect x="15" y="9" width="1" height="1" fill="#000"/><rect x="1" y="10" width="1" height="1" fill="#000"/><rect x="2" y="10" width="1" height="1" fill="#FF0000"/><rect x="3" y="10" width="1" height="1" fill="#000000"/><rect x="4" y="10" width="7" height="1" fill="#FF0000"/><rect x="11" y="10" width="3" height="1" fill="#000"/><rect x="14" y="10" width="1" height="1" fill="#FF0000"/><rect x="15" y="10" width="1" height="1" fill="#000"/><rect x="1" y="11" width="1" height="1" fill="#000"/><rect x="2" y="11" width="3" height="1" fill="#FF0000"/><rect x="5" y="11" width="7" height="1" fill="#000"/><rect x="12" y="11" width="3" height="1" fill="#FF0000"/><rect x="15" y="11" width="1" height="1" fill="#000"/><rect x="1" y="12" width="4" height="1" fill="#000"/><rect x="5" y="12" width="8" height="1" fill="#FF0000"/><rect x="13" y="12" width="3" height="1" fill="#000"/><rect x="2" y="13" width="1" height="1" fill="#000"/><rect x="3" y="13" width="2" height="1" fill="#FF0000"/><rect x="5" y="13" width="1" height="1" fill="#000"/><rect x="6" y="13" width="1" height="1" fill="#FF0000"/><rect x="7" y="13" width="1" height="1" fill="#000"/><rect x="8" y="13" width="1" height="1" fill="#FF0000"/><rect x="9" y="13" width="1" height="1" fill="#000"/><rect x="10" y="13" width="1" height="1" fill="#FF0000"/><rect x="11" y="13" width="1" height="1" fill="#000"/><rect x="12" y="13" width="2" height="1" fill="#FF0000"/><rect x="14" y="13" width="1" height="1" fill="#000"/><rect x="2" y="14" width="1" height="1" fill="#000"/><rect x="3" y="14" width="11" height="1" fill="#FF0000"/><rect x="14" y="14" width="1" height="1" fill="#000"/><rect x="2" y="15" width="13" height="1" fill="#000"/></svg>
<div class="tx" style="left:214.4px;top:119px;font-size:12.5px;color:#FF3232;transform:scaleX(0.84);">Main FTP Server</div>
<div class="tx" style="left:421.9px;top:119px;font-size:12.5px;color:#FF3232;transform:scaleX(0.8197);">No answer</div>
<div class="tx" style="left:530.43px;top:119px;font-size:12.5px;color:#FF3232;transform:scaleX(0.82);">1</div>
<div class="tx" style="left:695.5px;top:119px;font-size:12.5px;color:#FF3232;transform:scaleX(0.84);">TCP (port</div>
<svg style="left:195px;top:133px;" width="16" height="16" viewBox="0 0 16 16" shape-rendering="crispEdges"><rect x="4" y="0" width="9" height="1" fill="#000"/><rect x="4" y="1" width="1" height="1" fill="#000"/><rect x="5" y="1" width="7" height="1" fill="#fff"/><rect x="12" y="1" width="1" height="1" fill="#000"/><rect x="4" y="2" width="1" height="1" fill="#000"/><rect x="5" y="2" width="1" height="1" fill="#fff"/><rect x="6" y="2" width="5" height="1" fill="#000"/><rect x="11" y="2" width="1" height="1" fill="#fff"/><rect x="12" y="2" width="1" height="1" fill="#000"/><rect x="4" y="3" width="1" height="1" fill="#000"/><rect x="5" y="3" width="1" height="1" fill="#fff"/><rect x="6" y="3" width="1" height="1" fill="#000"/><rect x="7" y="3" width="3" height="1" fill="#00FF00"/><rect x="10" y="3" width="1" height="1" fill="#000"/><rect x="11" y="3" width="1" height="1" fill="#fff"/><rect x="12" y="3" width="1" height="1" fill="#000"/><rect x="4" y="4" width="1" height="1" fill="#000"/><rect x="5" y="4" width="1" height="1" fill="#fff"/><rect x="6" y="4" width="1" height="1" fill="#000"/><rect x="7" y="4" width="3" height="1" fill="#00FF00"/><rect x="10" y="4" width="1" height="1" fill="#000"/><rect x="11" y="4" width="1" height="1" fill="#fff"/><rect x="12" y="4" width="1" height="1" fill="#000"/><rect x="4" y="5" width="1" height="1" fill="#000"/><rect x="5" y="5" width="1" height="1" fill="#fff"/><rect x="6" y="5" width="5" height="1" fill="#000"/><rect x="11" y="5" width="1" height="1" fill="#fff"/><rect x="12" y="5" width="1" height="1" fill="#000"/><rect x="4" y="6" width="1" height="1" fill="#000"/><rect x="5" y="6" width="7" height="1" fill="#fff"/><rect x="12" y="6" width="1" height="1" fill="#000"/><rect x="4" y="7" width="9" height="1" fill="#000"/><rect x="1" y="8" width="15" height="1" fill="#000"/><rect x="1" y="9" width="1" height="1" fill="#000"/><rect x="2" y="9" width="1" height="1" fill="#fff"/><rect x="3" y="9" width="1" height="1" fill="#FF0000"/><rect x="4" y="9" width="11" height="1" fill="#fff"/><rect x="15" y="9" width="1" height="1" fill="#000"/><rect x="1" y="10" width="1" height="1" fill="#000"/><rect x="2" y="10" width="1" height="1" fill="#fff"/><rect x="3" y="10" width="1" height="1" fill="#FF0000"/><rect x="4" y="10" width="7" height="1" fill="#fff"/><rect x="11" y="10" width="3" height="1" fill="#000"/><rect x="14" y="10" width="1" height="1" fill="#fff"/><rect x="15" y="10" width="1" height="1" fill="#000"/><rect x="1" y="11" width="1" height="1" fill="#000"/><rect x="2" y="11" width="3" height="1" fill="#fff"/><rect x="5" y="11" width="7" height="1" fill="#000"/><rect x="12" y="11" width="3" height="1" fill="#fff"/><rect x="15" y="11" width="1" height="1" fill="#000"/><rect x="1" y="12" width="4" height="1" fill="#000"/><rect x="5" y="12" width="8" height="1" fill="#fff"/><rect x="13" y="12" width="3" height="1" fill="#000"/><rect x="2" y="13" width="1" height="1" fill="#000"/><rect x="3" y="13" width="2" height="1" fill="#fff"/><rect x="5" y="13" width="1" height="1" fill="#000"/><rect x="6" y="13" width="1" height="1" fill="#fff"/><rect x="7" y="13" width="1" height="1" fill="#000"/><rect x="8" y="13" width="1" height="1" fill="#fff"/><rect x="9" y="13" width="1" height="1" fill="#000"/><rect x="10" y="13" width="1" height="1" fill="#fff"/><rect x="11" y="13" width="1" height="1" fill="#000"/><rect x="12" y="13" width="2" height="1" fill="#fff"/><rect x="14" y="13" width="1" height="1" fill="#000"/><rect x="2" y="14" width="1" height="1" fill="#000"/><rect x="3" y="14" width="11" height="1" fill="#fff"/><rect x="14" y="14" width="1" height="1" fill="#000"/><rect x="2" y="15" width="13" height="1" fill="#000"/></svg>
<div class="tx" style="left:214.4px;top:136px;font-size:12.5px;color:#FFFFFF;transform:scaleX(0.8463);">Main Web server</div>
<div class="tx" style="left:418.75px;top:136px;font-size:12.5px;color:#FFFFFF;transform:scaleX(0.8403);">Host is alive</div>
<div class="tx" style="left:530.43px;top:136px;font-size:12.5px;color:#FFFFFF;transform:scaleX(0.82);">8</div>
<div class="tx" style="left:610.1px;top:136px;font-size:12.5px;color:#FFFFFF;transform:scaleX(0.781);">799 ms</div>
<div class="tx" style="left:695.5px;top:136px;font-size:12.5px;color:#FFFFFF;transform:scaleX(0.84);">URL requ</div>
<div class="a" style="left:212px;top:150px;width:522px;height:17px;background:#0080FF;"></div>
<svg style="left:197px;top:152px;" width="15" height="10" viewBox="0 0 15 10" shape-rendering="crispEdges"><rect x="1" y="0" width="1" height="1" fill="#808080"/><rect x="2" y="0" width="4" height="1" fill="#000"/><rect x="6" y="0" width="1" height="1" fill="#808080"/><rect x="0" y="1" width="1" height="1" fill="#000"/><rect x="1" y="1" width="1" height="1" fill="#FFFF00"/><rect x="2" y="1" width="1" height="1" fill="#F0F0C8"/><rect x="3" y="1" width="1" height="1" fill="#FFFF00"/><rect x="4" y="1" width="1" height="1" fill="#F0F0C8"/><rect x="5" y="1" width="1" height="1" fill="#FFFF00"/><rect x="6" y="1" width="1" height="1" fill="#000"/><rect x="0" y="2" width="1" height="1" fill="#000"/><rect x="1" y="2" width="1" height="1" fill="#F0F0C8"/><rect x="2" y="2" width="1" height="1" fill="#FFFF00"/><rect x="3" y="2" width="1" height="1" fill="#F0F0C8"/><rect x="4" y="2" width="1" height="1" fill="#FFFF00"/><rect x="5" y="2" width="1" height="1" fill="#F0F0C8"/><rect x="6" y="2" width="1" height="1" fill="#FFFF00"/><rect x="7" y="2" width="5" height="1" fill="#000"/><rect x="0" y="3" width="1" height="1" fill="#000"/><rect x="1" y="3" width="1" height="1" fill="#FFFF00"/><rect x="2" y="3" width="1" height="1" fill="#F0F0C8"/><rect x="3" y="3" width="1" height="1" fill="#FFFF00"/><rect x="4" y="3" width="1" height="1" fill="#F0F0C8"/><rect x="5" y="3" width="1" height="1" fill="#FFFF00"/><rect x="6" y="3" width="1" height="1" fill="#F0F0C8"/><rect x="7" y="3" width="1" height="1" fill="#FFFF00"/><rect x="8" y="3" width="1" height="1" fill="#F0F0C8"/><rect x="9" y="3" width="1" height="1" fill="#FFFF00"/><rect x="10" y="3" width="1" height="1" fill="#F0F0C8"/><rect x="11" y="3" width="1" height="1" fill="#000"/><rect x="0" y="4" width="1" height="1" fill="#000"/><rect x="1" y="4" width="1" height="1" fill="#F0F0C8"/><rect x="2" y="4" width="1" height="1" fill="#FFFF00"/><rect x="3" y="4" width="1" height="1" fill="#F0F0C8"/><rect x="4" y="4" width="1" height="1" fill="#FFFF00"/><rect x="5" y="4" width="1" height="1" fill="#F0F0C8"/><rect x="6" y="4" width="1" height="1" fill="#FFFF00"/><rect x="7" y="4" width="1" height="1" fill="#F0F0C8"/><rect x="8" y="4" width="1" height="1" fill="#FFFF00"/><rect x="9" y="4" width="1" height="1" fill="#F0F0C8"/><rect x="10" y="4" width="1" height="1" fill="#FFFF00"/><rect x="11" y="4" width="1" height="1" fill="#000"/><rect x="0" y="5" width="1" height="1" fill="#000"/><rect x="1" y="5" width="1" height="1" fill="#FFFF00"/><rect x="2" y="5" width="1" height="1" fill="#F0F0C8"/><rect x="3" y="5" width="11" height="1" fill="#000"/><rect x="0" y="6" width="1" height="1" fill="#000"/><rect x="1" y="6" width="1" height="1" fill="#F0F0C8"/><rect x="2" y="6" width="1" height="1" fill="#000"/><rect x="3" y="6" width="1" height="1" fill="#F0F0C8"/><rect x="4" y="6" width="1" height="1" fill="#FFFF00"/><rect x="5" y="6" width="1" height="1" fill="#F0F0C8"/><rect x="6" y="6" width="1" height="1" fill="#FFFF00"/><rect x="7" y="6" width="1" height="1" fill="#F0F0C8"/><rect x="8" y="6" width="1" height="1" fill="#FFFF00"/><rect x="9" y="6" width="1" height="1" fill="#F0F0C8"/><rect x="10" y="6" width="1" height="1" fill="#FFFF00"/><rect x="11" y="6" width="1" height="1" fill="#F0F0C8"/><rect x="12" y="6" width="1" height="1" fill="#FFFF00"/><rect x="13" y="6" width="1" height="1" fill="#000"/><rect x="0" y="7" width="2" height="1" fill="#000"/><rect x="2" y="7" width="1" height="1" fill="#F0F0C8"/><rect x="3" y="7" width="1" height="1" fill="#FFFF00"/><rect x="4" y="7" width="1" height="1" fill="#F0F0C8"/><rect x="5" y="7" width="1" height="1" fill="#FFFF00"/><rect x="6" y="7" width="1" height="1" fill="#F0F0C8"/><rect x="7" y="7" width="1" height="1" fill="#FFFF00"/><rect x="8" y="7" width="1" height="1" fill="#F0F0C8"/><rect x="9" y="7" width="1" height="1" fill="#FFFF00"/><rect x="10" y="7" width="1" height="1" fill="#F0F0C8"/><rect x="11" y="7" width="1" height="1" fill="#FFFF00"/><rect x="12" y="7" width="1" height="1" fill="#000"/><rect x="1" y="8" width="1" height="1" fill="#000"/><rect x="2" y="8" width="1" height="1" fill="#FFFF00"/><rect x="3" y="8" width="1" height="1" fill="#F0F0C8"/><rect x="4" y="8" width="1" height="1" fill="#FFFF00"/><rect x="5" y="8" width="1" height="1" fill="#F0F0C8"/><rect x="6" y="8" width="1" height="1" fill="#FFFF00"/><rect x="7" y="8" width="1" height="1" fill="#F0F0C8"/><rect x="8" y="8" width="1" height="1" fill="#FFFF00"/><rect x="9" y="8" width="1" height="1" fill="#F0F0C8"/><rect x="10" y="8" width="1" height="1" fill="#FFFF00"/><rect x="11" y="8" width="1" height="1" fill="#000"/><rect x="1" y="9" width="11" height="1" fill="#000"/></svg>
<div class="tx" style="left:214.4px;top:153px;font-size:12.5px;color:#FFFFFF;transform:scaleX(0.898);">Root\USA Branch\</div>
<svg style="left:195px;top:166px;" width="16" height="17" viewBox="0 0 16 17" shape-rendering="crispEdges"><rect x="8" y="1" width="1" height="1" fill="#FF0000"/><rect x="8" y="2" width="1" height="1" fill="#FF0000"/><rect x="3" y="3" width="1" height="1" fill="#FF0000"/><rect x="6" y="3" width="5" height="1" fill="#FF0000"/><rect x="13" y="3" width="1" height="1" fill="#FF0000"/><rect x="4" y="4" width="9" height="1" fill="#FF0000"/><rect x="3" y="5" width="3" height="1" fill="#FF0000"/><rect x="6" y="5" width="5" height="1" fill="#000"/><rect x="11" y="5" width="3" height="1" fill="#FF0000"/><rect x="3" y="6" width="2" height="1" fill="#FF0000"/><rect x="5" y="6" width="1" height="1" fill="#000"/><rect x="6" y="6" width="1" height="1" fill="#F0F0F0"/><rect x="7" y="6" width="1" height="1" fill="#FF0000"/><rect x="8" y="6" width="1" height="1" fill="#F0F0F0"/><rect x="9" y="6" width="1" height="1" fill="#FF0000"/><rect x="10" y="6" width="1" height="1" fill="#F0F0F0"/><rect x="11" y="6" width="1" height="1" fill="#000"/><rect x="12" y="6" width="2" height="1" fill="#FF0000"/><rect x="3" y="7" width="2" height="1" fill="#FF0000"/><rect x="5" y="7" width="1" height="1" fill="#000"/><rect x="6" y="7" width="1" height="1" fill="#FF0000"/><rect x="7" y="7" width="1" height="1" fill="#F0F0F0"/><rect x="8" y="7" width="1" height="1" fill="#FF0000"/><rect x="9" y="7" width="1" height="1" fill="#F0F0F0"/><rect x="10" y="7" width="1" height="1" fill="#FF0000"/><rect x="11" y="7" width="1" height="1" fill="#000"/><rect x="12" y="7" width="2" height="1" fill="#FF0000"/><rect x="1" y="8" width="4" height="1" fill="#FF0000"/><rect x="5" y="8" width="1" height="1" fill="#000"/><rect x="6" y="8" width="1" height="1" fill="#F0F0F0"/><rect x="7" y="8" width="1" height="1" fill="#FF0000"/><rect x="8" y="8" width="1" height="1" fill="#F0F0F0"/><rect x="9" y="8" width="1" height="1" fill="#FF0000"/><rect x="10" y="8" width="1" height="1" fill="#F0F0F0"/><rect x="11" y="8" width="1" height="1" fill="#000"/><rect x="12" y="8" width="4" height="1" fill="#FF0000"/><rect x="3" y="9" width="2" height="1" fill="#FF0000"/><rect x="5" y="9" width="1" height="1" fill="#000"/><rect x="6" y="9" width="1" height="1" fill="#FF0000"/><rect x="7" y="9" width="1" height="1" fill="#F0F0F0"/><rect x="8" y="9" width="1" height="1" fill="#FF0000"/><rect x="9" y="9" width="1" height="1" fill="#F0F0F0"/><rect x="10" y="9" width="1" height="1" fill="#FF0000"/><rect x="11" y="9" width="1" height="1" fill="#000"/><rect x="12" y="9" width="2" height="1" fill="#FF0000"/><rect x="3" y="10" width="2" height="1" fill="#FF0000"/><rect x="5" y="10" width="1" height="1" fill="#000"/><rect x="6" y="10" width="1" height="1" fill="#F0F0F0"/><rect x="7" y="10" width="1" height="1" fill="#FF0000"/><rect x="8" y="10" width="1" height="1" fill="#F0F0F0"/><rect x="9" y="10" width="1" height="1" fill="#FF0000"/><rect x="10" y="10" width="1" height="1" fill="#F0F0F0"/><rect x="11" y="10" width="1" height="1" fill="#000"/><rect x="12" y="10" width="2" height="1" fill="#FF0000"/><rect x="3" y="11" width="3" height="1" fill="#FF0000"/><rect x="6" y="11" width="2" height="1" fill="#000"/><rect x="8" y="11" width="1" height="1" fill="#F0F0F0"/><rect x="9" y="11" width="2" height="1" fill="#000"/><rect x="11" y="11" width="3" height="1" fill="#FF0000"/><rect x="4" y="12" width="3" height="1" fill="#FF0000"/><rect x="7" y="12" width="1" height="1" fill="#000"/><rect x="8" y="12" width="1" height="1" fill="#FF0000"/><rect x="9" y="12" width="1" height="1" fill="#000"/><rect x="10" y="12" width="3" height="1" fill="#FF0000"/><rect x="3" y="13" width="1" height="1" fill="#FF0000"/><rect x="5" y="13" width="2" height="1" fill="#FF0000"/><rect x="7" y="13" width="3" height="1" fill="#000"/><rect x="10" y="13" width="2" height="1" fill="#FF0000"/><rect x="13" y="13" width="1" height="1" fill="#FF0000"/><rect x="7" y="14" width="1" height="1" fill="#000"/><rect x="8" y="14" width="1" height="1" fill="#F0F0F0"/><rect x="9" y="14" width="1" height="1" fill="#000"/><rect x="7" y="15" width="3" height="1" fill="#000"/><rect x="8" y="16" width="1" height="1" fill="#000"/></svg>
<div class="tx" style="left:214.4px;top:170px;font-size:12.5px;color:#FF3232;transform:scaleX(0.8338);">CPU localhost</div>
<div class="tx" style="left:437.9px;top:170px;font-size:12.5px;color:#FF3232;transform:scaleX(0.8182);">Bad</div>
<div class="tx" style="left:530.43px;top:170px;font-size:12.5px;color:#FF3232;transform:scaleX(0.82);">1</div>
<div class="tx" style="left:614.75px;top:170px;font-size:12.5px;color:#FF3232;transform:scaleX(0.8103);">92 %</div>
<div class="tx" style="left:695.5px;top:170px;font-size:12.5px;color:#FF3232;transform:scaleX(0.84);">CPU Usa</div>
<svg style="left:195px;top:183px;" width="16" height="17" viewBox="0 0 16 17" shape-rendering="crispEdges"><rect x="8" y="1" width="1" height="1" fill="#00FF00"/><rect x="8" y="2" width="1" height="1" fill="#00FF00"/><rect x="3" y="3" width="1" height="1" fill="#00FF00"/><rect x="6" y="3" width="5" height="1" fill="#00FF00"/><rect x="13" y="3" width="1" height="1" fill="#00FF00"/><rect x="4" y="4" width="9" height="1" fill="#00FF00"/><rect x="3" y="5" width="3" height="1" fill="#00FF00"/><rect x="6" y="5" width="5" height="1" fill="#000"/><rect x="11" y="5" width="3" height="1" fill="#00FF00"/><rect x="3" y="6" width="2" height="1" fill="#00FF00"/><rect x="5" y="6" width="1" height="1" fill="#000"/><rect x="6" y="6" width="1" height="1" fill="#F0F0F0"/><rect x="7" y="6" width="1" height="1" fill="#00FF00"/><rect x="8" y="6" width="1" height="1" fill="#F0F0F0"/><rect x="9" y="6" width="1" height="1" fill="#00FF00"/><rect x="10" y="6" width="1" height="1" fill="#F0F0F0"/><rect x="11" y="6" width="1" height="1" fill="#000"/><rect x="12" y="6" width="2" height="1" fill="#00FF00"/><rect x="3" y="7" width="2" height="1" fill="#00FF00"/><rect x="5" y="7" width="1" height="1" fill="#000"/><rect x="6" y="7" width="1" height="1" fill="#00FF00"/><rect x="7" y="7" width="1" height="1" fill="#F0F0F0"/><rect x="8" y="7" width="1" height="1" fill="#00FF00"/><rect x="9" y="7" width="1" height="1" fill="#F0F0F0"/><rect x="10" y="7" width="1" height="1" fill="#00FF00"/><rect x="11" y="7" width="1" height="1" fill="#000"/><rect x="12" y="7" width="2" height="1" fill="#00FF00"/><rect x="1" y="8" width="4" height="1" fill="#00FF00"/><rect x="5" y="8" width="1" height="1" fill="#000"/><rect x="6" y="8" width="1" height="1" fill="#F0F0F0"/><rect x="7" y="8" width="1" height="1" fill="#00FF00"/><rect x="8" y="8" width="1" height="1" fill="#F0F0F0"/><rect x="9" y="8" width="1" height="1" fill="#00FF00"/><rect x="10" y="8" width="1" height="1" fill="#F0F0F0"/><rect x="11" y="8" width="1" height="1" fill="#000"/><rect x="12" y="8" width="4" height="1" fill="#00FF00"/><rect x="3" y="9" width="2" height="1" fill="#00FF00"/><rect x="5" y="9" width="1" height="1" fill="#000"/><rect x="6" y="9" width="1" height="1" fill="#00FF00"/><rect x="7" y="9" width="1" height="1" fill="#F0F0F0"/><rect x="8" y="9" width="1" height="1" fill="#00FF00"/><rect x="9" y="9" width="1" height="1" fill="#F0F0F0"/><rect x="10" y="9" width="1" height="1" fill="#00FF00"/><rect x="11" y="9" width="1" height="1" fill="#000"/><rect x="12" y="9" width="2" height="1" fill="#00FF00"/><rect x="3" y="10" width="2" height="1" fill="#00FF00"/><rect x="5" y="10" width="1" height="1" fill="#000"/><rect x="6" y="10" width="1" height="1" fill="#F0F0F0"/><rect x="7" y="10" width="1" height="1" fill="#00FF00"/><rect x="8" y="10" width="1" height="1" fill="#F0F0F0"/><rect x="9" y="10" width="1" height="1" fill="#00FF00"/><rect x="10" y="10" width="1" height="1" fill="#F0F0F0"/><rect x="11" y="10" width="1" height="1" fill="#000"/><rect x="12" y="10" width="2" height="1" fill="#00FF00"/><rect x="3" y="11" width="3" height="1" fill="#00FF00"/><rect x="6" y="11" width="2" height="1" fill="#000"/><rect x="8" y="11" width="1" height="1" fill="#F0F0F0"/><rect x="9" y="11" width="2" height="1" fill="#000"/><rect x="11" y="11" width="3" height="1" fill="#00FF00"/><rect x="4" y="12" width="3" height="1" fill="#00FF00"/><rect x="7" y="12" width="1" height="1" fill="#000"/><rect x="8" y="12" width="1" height="1" fill="#00FF00"/><rect x="9" y="12" width="1" height="1" fill="#000"/><rect x="10" y="12" width="3" height="1" fill="#00FF00"/><rect x="3" y="13" width="1" height="1" fill="#00FF00"/><rect x="5" y="13" width="2" height="1" fill="#00FF00"/><rect x="7" y="13" width="3" height="1" fill="#000"/><rect x="10" y="13" width="2" height="1" fill="#00FF00"/><rect x="13" y="13" width="1" height="1" fill="#00FF00"/><rect x="7" y="14" width="1" height="1" fill="#000"/><rect x="8" y="14" width="1" height="1" fill="#F0F0F0"/><rect x="9" y="14" width="1" height="1" fill="#000"/><rect x="7" y="15" width="3" height="1" fill="#000"/><rect x="8" y="16" width="1" height="1" fill="#000"/></svg>
<div class="tx" style="left:214.4px;top:187px;font-size:12.5px;color:#FFFFFF;transform:scaleX(0.8152);">Free Physical memory</div>
<div class="tx" style="left:440.54999999999995px;top:187px;font-size:12.5px;color:#FFFFFF;transform:scaleX(0.7471);">Ok</div>
<div class="tx" style="left:530.43px;top:187px;font-size:12.5px;color:#FFFFFF;transform:scaleX(0.82);">1</div>
<div class="tx" style="left:614.75px;top:187px;font-size:12.5px;color:#FFFFFF;transform:scaleX(0.8103);">57 %</div>
<div class="tx" style="left:695.5px;top:187px;font-size:12.5px;color:#FFFFFF;transform:scaleX(0.84);">Memory</div>
<svg style="left:195px;top:200px;" width="16" height="17" viewBox="0 0 16 17" shape-rendering="crispEdges"><rect x="8" y="1" width="1" height="1" fill="#00FF00"/><rect x="8" y="2" width="1" height="1" fill="#00FF00"/><rect x="3" y="3" width="1" height="1" fill="#00FF00"/><rect x="6" y="3" width="5" height="1" fill="#00FF00"/><rect x="13" y="3" width="1" height="1" fill="#00FF00"/><rect x="4" y="4" width="9" height="1" fill="#00FF00"/><rect x="3" y="5" width="3" height="1" fill="#00FF00"/><rect x="6" y="5" width="5" height="1" fill="#000"/><rect x="11" y="5" width="3" height="1" fill="#00FF00"/><rect x="3" y="6" width="2" height="1" fill="#00FF00"/><rect x="5" y="6" width="1" height="1" fill="#000"/><rect x="6" y="6" width="1" height="1" fill="#F0F0F0"/><rect x="7" y="6" width="1" height="1" fill="#00FF00"/><rect x="8" y="6" width="1" height="1" fill="#F0F0F0"/><rect x="9" y="6" width="1" height="1" fill="#00FF00"/><rect x="10" y="6" width="1" height="1" fill="#F0F0F0"/><rect x="11" y="6" width="1" height="1" fill="#000"/><rect x="12" y="6" width="2" height="1" fill="#00FF00"/><rect x="3" y="7" width="2" height="1" fill="#00FF00"/><rect x="5" y="7" width="1" height="1" fill="#000"/><rect x="6" y="7" width="1" height="1" fill="#00FF00"/><rect x="7" y="7" width="1" height="1" fill="#F0F0F0"/><rect x="8" y="7" width="1" height="1" fill="#00FF00"/><rect x="9" y="7" width="1" height="1" fill="#F0F0F0"/><rect x="10" y="7" width="1" height="1" fill="#00FF00"/><rect x="11" y="7" width="1" height="1" fill="#000"/><rect x="12" y="7" width="2" height="1" fill="#00FF00"/><rect x="1" y="8" width="4" height="1" fill="#00FF00"/><rect x="5" y="8" width="1" height="1" fill="#000"/><rect x="6" y="8" width="1" height="1" fill="#F0F0F0"/><rect x="7" y="8" width="1" height="1" fill="#00FF00"/><rect x="8" y="8" width="1" height="1" fill="#F0F0F0"/><rect x="9" y="8" width="1" height="1" fill="#00FF00"/><rect x="10" y="8" width="1" height="1" fill="#F0F0F0"/><rect x="11" y="8" width="1" height="1" fill="#000"/><rect x="12" y="8" width="4" height="1" fill="#00FF00"/><rect x="3" y="9" width="2" height="1" fill="#00FF00"/><rect x="5" y="9" width="1" height="1" fill="#000"/><rect x="6" y="9" width="1" height="1" fill="#00FF00"/><rect x="7" y="9" width="1" height="1" fill="#F0F0F0"/><rect x="8" y="9" width="1" height="1" fill="#00FF00"/><rect x="9" y="9" width="1" height="1" fill="#F0F0F0"/><rect x="10" y="9" width="1" height="1" fill="#00FF00"/><rect x="11" y="9" width="1" height="1" fill="#000"/><rect x="12" y="9" width="2" height="1" fill="#00FF00"/><rect x="3" y="10" width="2" height="1" fill="#00FF00"/><rect x="5" y="10" width="1" height="1" fill="#000"/><rect x="6" y="10" width="1" height="1" fill="#F0F0F0"/><rect x="7" y="10" width="1" height="1" fill="#00FF00"/><rect x="8" y="10" width="1" height="1" fill="#F0F0F0"/><rect x="9" y="10" width="1" height="1" fill="#00FF00"/><rect x="10" y="10" width="1" height="1" fill="#F0F0F0"/><rect x="11" y="10" width="1" height="1" fill="#000"/><rect x="12" y="10" width="2" height="1" fill="#00FF00"/><rect x="3" y="11" width="3" height="1" fill="#00FF00"/><rect x="6" y="11" width="2" height="1" fill="#000"/><rect x="8" y="11" width="1" height="1" fill="#F0F0F0"/><rect x="9" y="11" width="2" height="1" fill="#000"/><rect x="11" y="11" width="3" height="1" fill="#00FF00"/><rect x="4" y="12" width="3" height="1" fill="#00FF00"/><rect x="7" y="12" width="1" height="1" fill="#000"/><rect x="8" y="12" width="1" height="1" fill="#00FF00"/><rect x="9" y="12" width="1" height="1" fill="#000"/><rect x="10" y="12" width="3" height="1" fill="#00FF00"/><rect x="3" y="13" width="1" height="1" fill="#00FF00"/><rect x="5" y="13" width="2" height="1" fill="#00FF00"/><rect x="7" y="13" width="3" height="1" fill="#000"/><rect x="10" y="13" width="2" height="1" fill="#00FF00"/><rect x="13" y="13" width="1" height="1" fill="#00FF00"/><rect x="7" y="14" width="1" height="1" fill="#000"/><rect x="8" y="14" width="1" height="1" fill="#F0F0F0"/><rect x="9" y="14" width="1" height="1" fill="#000"/><rect x="7" y="15" width="3" height="1" fill="#000"/><rect x="8" y="16" width="1" height="1" fill="#000"/></svg>
<div class="tx" style="left:214.4px;top:204px;font-size:12.5px;color:#FFFFFF;transform:scaleX(0.8053);">Free Virtual memory</div>
<div class="tx" style="left:440.54999999999995px;top:204px;font-size:12.5px;color:#FFFFFF;transform:scaleX(0.7471);">Ok</div>
<div class="tx" style="left:530.43px;top:204px;font-size:12.5px;color:#FFFFFF;transform:scaleX(0.82);">1</div>
<div class="tx" style="left:602.2px;top:204px;font-size:12.5px;color:#FFFFFF;transform:scaleX(0.8679);">22196 Mb</div>
<div class="tx" style="left:695.5px;top:204px;font-size:12.5px;color:#FFFFFF;transform:scaleX(0.84);">Memory</div>
<svg style="left:195px;top:218px;" width="16" height="16" viewBox="0 0 16 16" shape-rendering="crispEdges"><rect x="4" y="0" width="9" height="1" fill="#000"/><rect x="4" y="1" width="1" height="1" fill="#000"/><rect x="5" y="1" width="7" height="1" fill="#fff"/><rect x="12" y="1" width="1" height="1" fill="#000"/><rect x="4" y="2" width="1" height="1" fill="#000"/><rect x="5" y="2" width="1" height="1" fill="#fff"/><rect x="6" y="2" width="5" height="1" fill="#000"/><rect x="11" y="2" width="1" height="1" fill="#fff"/><rect x="12" y="2" width="1" height="1" fill="#000"/><rect x="4" y="3" width="1" height="1" fill="#000"/><rect x="5" y="3" width="1" height="1" fill="#fff"/><rect x="6" y="3" width="1" height="1" fill="#000"/><rect x="7" y="3" width="3" height="1" fill="#00FF00"/><rect x="10" y="3" width="1" height="1" fill="#000"/><rect x="11" y="3" width="1" height="1" fill="#fff"/><rect x="12" y="3" width="1" height="1" fill="#000"/><rect x="4" y="4" width="1" height="1" fill="#000"/><rect x="5" y="4" width="1" height="1" fill="#fff"/><rect x="6" y="4" width="1" height="1" fill="#000"/><rect x="7" y="4" width="3" height="1" fill="#00FF00"/><rect x="10" y="4" width="1" height="1" fill="#000"/><rect x="11" y="4" width="1" height="1" fill="#fff"/><rect x="12" y="4" width="1" height="1" fill="#000"/><rect x="4" y="5" width="1" height="1" fill="#000"/><rect x="5" y="5" width="1" height="1" fill="#fff"/><rect x="6" y="5" width="5" height="1" fill="#000"/><rect x="11" y="5" width="1" height="1" fill="#fff"/><rect x="12" y="5" width="1" height="1" fill="#000"/><rect x="4" y="6" width="1" height="1" fill="#000"/><rect x="5" y="6" width="7" height="1" fill="#fff"/><rect x="12" y="6" width="1" height="1" fill="#000"/><rect x="4" y="7" width="9" height="1" fill="#000"/><rect x="1" y="8" width="15" height="1" fill="#000"/><rect x="1" y="9" width="1" height="1" fill="#000"/><rect x="2" y="9" width="1" height="1" fill="#fff"/><rect x="3" y="9" width="1" height="1" fill="#FF0000"/><rect x="4" y="9" width="11" height="1" fill="#fff"/><rect x="15" y="9" width="1" height="1" fill="#000"/><rect x="1" y="10" width="1" height="1" fill="#000"/><rect x="2" y="10" width="1" height="1" fill="#fff"/><rect x="3" y="10" width="1" height="1" fill="#FF0000"/><rect x="4" y="10" width="7" height="1" fill="#fff"/><rect x="11" y="10" width="3" height="1" fill="#000"/><rect x="14" y="10" width="1" height="1" fill="#fff"/><rect x="15" y="10" width="1" height="1" fill="#000"/><rect x="1" y="11" width="1" height="1" fill="#000"/><rect x="2" y="11" width="3" height="1" fill="#fff"/><rect x="5" y="11" width="7" height="1" fill="#000"/><rect x="12" y="11" width="3" height="1" fill="#fff"/><rect x="15" y="11" width="1" height="1" fill="#000"/><rect x="1" y="12" width="4" height="1" fill="#000"/><rect x="5" y="12" width="8" height="1" fill="#fff"/><rect x="13" y="12" width="3" height="1" fill="#000"/><rect x="2" y="13" width="1" height="1" fill="#000"/><rect x="3" y="13" width="2" height="1" fill="#fff"/><rect x="5" y="13" width="1" height="1" fill="#000"/><rect x="6" y="13" width="1" height="1" fill="#fff"/><rect x="7" y="13" width="1" height="1" fill="#000"/><rect x="8" y="13" width="1" height="1" fill="#fff"/><rect x="9" y="13" width="1" height="1" fill="#000"/><rect x="10" y="13" width="1" height="1" fill="#fff"/><rect x="11" y="13" width="1" height="1" fill="#000"/><rect x="12" y="13" width="2" height="1" fill="#fff"/><rect x="14" y="13" width="1" height="1" fill="#000"/><rect x="2" y="14" width="1" height="1" fill="#000"/><rect x="3" y="14" width="11" height="1" fill="#fff"/><rect x="14" y="14" width="1" height="1" fill="#000"/><rect x="2" y="15" width="13" height="1" fill="#000"/></svg>
<div class="tx" style="left:214.4px;top:221px;font-size:12.5px;color:#FFFFFF;transform:scaleX(0.8266);">Main router</div>
<div class="tx" style="left:418.75px;top:221px;font-size:12.5px;color:#FFFFFF;transform:scaleX(0.8403);">Host is alive</div>
<div class="tx" style="left:527.56px;top:221px;font-size:12.5px;color:#FFFFFF;transform:scaleX(0.82);">13</div>
<div class="tx" style="left:616.85px;top:221px;font-size:12.5px;color:#FFFFFF;transform:scaleX(0.6893);">1 ms</div>
<div class="tx" style="left:695.5px;top:221px;font-size:12.5px;color:#FFFFFF;transform:scaleX(0.84);">ping (time</div>
<div class="a" style="left:212px;top:235px;width:522px;height:17px;background:#000060;"></div>
<svg style="left:195px;top:235px;" width="16" height="16" viewBox="0 0 16 16" shape-rendering="crispEdges"><rect x="4" y="0" width="9" height="1" fill="#000"/><rect x="4" y="1" width="1" height="1" fill="#000"/><rect x="5" y="1" width="7" height="1" fill="#C8C8C8"/><rect x="12" y="1" width="1" height="1" fill="#000"/><rect x="4" y="2" width="1" height="1" fill="#000"/><rect x="5" y="2" width="1" height="1" fill="#C8C8C8"/><rect x="6" y="2" width="5" height="1" fill="#000"/><rect x="11" y="2" width="1" height="1" fill="#C8C8C8"/><rect x="12" y="2" width="1" height="1" fill="#000"/><rect x="4" y="3" width="1" height="1" fill="#000"/><rect x="5" y="3" width="1" height="1" fill="#C8C8C8"/><rect x="6" y="3" width="1" height="1" fill="#000"/><rect x="7" y="3" width="3" height="1" fill="#A00000"/><rect x="10" y="3" width="1" height="1" fill="#000"/><rect x="11" y="3" width="1" height="1" fill="#C8C8C8"/><rect x="12" y="3" width="1" height="1" fill="#000"/><rect x="4" y="4" width="1" height="1" fill="#000"/><rect x="5" y="4" width="1" height="1" fill="#C8C8C8"/><rect x="6" y="4" width="1" height="1" fill="#000"/><rect x="7" y="4" width="3" height="1" fill="#A00000"/><rect x="10" y="4" width="1" height="1" fill="#000"/><rect x="11" y="4" width="1" height="1" fill="#C8C8C8"/><rect x="12" y="4" width="1" height="1" fill="#000"/><rect x="4" y="5" width="1" height="1" fill="#000"/><rect x="5" y="5" width="1" height="1" fill="#C8C8C8"/><rect x="6" y="5" width="5" height="1" fill="#000"/><rect x="11" y="5" width="1" height="1" fill="#C8C8C8"/><rect x="12" y="5" width="1" height="1" fill="#000"/><rect x="4" y="6" width="1" height="1" fill="#000"/><rect x="5" y="6" width="7" height="1" fill="#C8C8C8"/><rect x="12" y="6" width="1" height="1" fill="#000"/><rect x="4" y="7" width="9" height="1" fill="#000"/><rect x="1" y="8" width="15" height="1" fill="#000"/><rect x="1" y="9" width="1" height="1" fill="#000"/><rect x="2" y="9" width="1" height="1" fill="#C8C8C8"/><rect x="3" y="9" width="1" height="1" fill="#C0C0C0"/><rect x="4" y="9" width="11" height="1" fill="#C8C8C8"/><rect x="15" y="9" width="1" height="1" fill="#000"/><rect x="1" y="10" width="1" height="1" fill="#000"/><rect x="2" y="10" width="1" height="1" fill="#C8C8C8"/><rect x="3" y="10" width="1" height="1" fill="#C0C0C0"/><rect x="4" y="10" width="7" height="1" fill="#C8C8C8"/><rect x="11" y="10" width="3" height="1" fill="#000"/><rect x="14" y="10" width="1" height="1" fill="#C8C8C8"/><rect x="15" y="10" width="1" height="1" fill="#000"/><rect x="1" y="11" width="1" height="1" fill="#000"/><rect x="2" y="11" width="3" height="1" fill="#C8C8C8"/><rect x="5" y="11" width="7" height="1" fill="#000"/><rect x="12" y="11" width="3" height="1" fill="#C8C8C8"/><rect x="15" y="11" width="1" height="1" fill="#000"/><rect x="1" y="12" width="4" height="1" fill="#000"/><rect x="5" y="12" width="8" height="1" fill="#C8C8C8"/><rect x="13" y="12" width="3" height="1" fill="#000"/><rect x="2" y="13" width="1" height="1" fill="#000"/><rect x="3" y="13" width="2" height="1" fill="#C8C8C8"/><rect x="5" y="13" width="1" height="1" fill="#000"/><rect x="6" y="13" width="1" height="1" fill="#C8C8C8"/><rect x="7" y="13" width="1" height="1" fill="#000"/><rect x="8" y="13" width="1" height="1" fill="#C8C8C8"/><rect x="9" y="13" width="1" height="1" fill="#000"/><rect x="10" y="13" width="1" height="1" fill="#C8C8C8"/><rect x="11" y="13" width="1" height="1" fill="#000"/><rect x="12" y="13" width="2" height="1" fill="#C8C8C8"/><rect x="14" y="13" width="1" height="1" fill="#000"/><rect x="2" y="14" width="1" height="1" fill="#000"/><rect x="3" y="14" width="11" height="1" fill="#C8C8C8"/><rect x="14" y="14" width="1" height="1" fill="#000"/><rect x="2" y="15" width="13" height="1" fill="#000"/></svg>
<div class="tx" style="left:214.4px;top:238px;font-size:12.5px;color:#C8C8C8;transform:scaleX(0.8425);">Server room: Temperature</div>
<div class="tx" style="left:426.54999999999995px;top:238px;font-size:12.5px;color:#C8C8C8;transform:scaleX(0.8306);">Disabled</div>
<div class="tx" style="left:530.43px;top:238px;font-size:12.5px;color:#C8C8C8;transform:scaleX(0.82);">2</div>
<div class="tx" style="left:571.6px;top:238px;font-size:12.5px;color:#C8C8C8;transform:scaleX(0.8382);">Cannot retrieve data f...</div>
<div class="tx" style="left:695.5px;top:238px;font-size:12.5px;color:#C8C8C8;transform:scaleX(0.84);">Temp. mon</div>
<div class="a" style="left:212px;top:252px;width:522px;height:17px;background:#0080FF;"></div>
<svg style="left:197px;top:254px;" width="15" height="10" viewBox="0 0 15 10" shape-rendering="crispEdges"><rect x="1" y="0" width="1" height="1" fill="#808080"/><rect x="2" y="0" width="4" height="1" fill="#000"/><rect x="6" y="0" width="1" height="1" fill="#808080"/><rect x="0" y="1" width="1" height="1" fill="#000"/><rect x="1" y="1" width="1" height="1" fill="#FFFF00"/><rect x="2" y="1" width="1" height="1" fill="#F0F0C8"/><rect x="3" y="1" width="1" height="1" fill="#FFFF00"/><rect x="4" y="1" width="1" height="1" fill="#F0F0C8"/><rect x="5" y="1" width="1" height="1" fill="#FFFF00"/><rect x="6" y="1" width="1" height="1" fill="#000"/><rect x="0" y="2" width="1" height="1" fill="#000"/><rect x="1" y="2" width="1" height="1" fill="#F0F0C8"/><rect x="2" y="2" width="1" height="1" fill="#FFFF00"/><rect x="3" y="2" width="1" height="1" fill="#F0F0C8"/><rect x="4" y="2" width="1" height="1" fill="#FFFF00"/><rect x="5" y="2" width="1" height="1" fill="#F0F0C8"/><rect x="6" y="2" width="1" height="1" fill="#FFFF00"/><rect x="7" y="2" width="5" height="1" fill="#000"/><rect x="0" y="3" width="1" height="1" fill="#000"/><rect x="1" y="3" width="1" height="1" fill="#FFFF00"/><rect x="2" y="3" width="1" height="1" fill="#F0F0C8"/><rect x="3" y="3" width="1" height="1" fill="#FFFF00"/><rect x="4" y="3" width="1" height="1" fill="#F0F0C8"/><rect x="5" y="3" width="1" height="1" fill="#FFFF00"/><rect x="6" y="3" width="1" height="1" fill="#F0F0C8"/><rect x="7" y="3" width="1" height="1" fill="#FFFF00"/><rect x="8" y="3" width="1" height="1" fill="#F0F0C8"/><rect x="9" y="3" width="1" height="1" fill="#FFFF00"/><rect x="10" y="3" width="1" height="1" fill="#F0F0C8"/><rect x="11" y="3" width="1" height="1" fill="#000"/><rect x="0" y="4" width="1" height="1" fill="#000"/><rect x="1" y="4" width="1" height="1" fill="#F0F0C8"/><rect x="2" y="4" width="1" height="1" fill="#FFFF00"/><rect x="3" y="4" width="1" height="1" fill="#F0F0C8"/><rect x="4" y="4" width="1" height="1" fill="#FFFF00"/><rect x="5" y="4" width="1" height="1" fill="#F0F0C8"/><rect x="6" y="4" width="1" height="1" fill="#FFFF00"/><rect x="7" y="4" width="1" height="1" fill="#F0F0C8"/><rect x="8" y="4" width="1" height="1" fill="#FFFF00"/><rect x="9" y="4" width="1" height="1" fill="#F0F0C8"/><rect x="10" y="4" width="1" height="1" fill="#FFFF00"/><rect x="11" y="4" width="1" height="1" fill="#000"/><rect x="0" y="5" width="1" height="1" fill="#000"/><rect x="1" y="5" width="1" height="1" fill="#FFFF00"/><rect x="2" y="5" width="1" height="1" fill="#F0F0C8"/><rect x="3" y="5" width="11" height="1" fill="#000"/><rect x="0" y="6" width="1" height="1" fill="#000"/><rect x="1" y="6" width="1" height="1" fill="#F0F0C8"/><rect x="2" y="6" width="1" height="1" fill="#000"/><rect x="3" y="6" width="1" height="1" fill="#F0F0C8"/><rect x="4" y="6" width="1" height="1" fill="#FFFF00"/><rect x="5" y="6" width="1" height="1" fill="#F0F0C8"/><rect x="6" y="6" width="1" height="1" fill="#FFFF00"/><rect x="7" y="6" width="1" height="1" fill="#F0F0C8"/><rect x="8" y="6" width="1" height="1" fill="#FFFF00"/><rect x="9" y="6" width="1" height="1" fill="#F0F0C8"/><rect x="10" y="6" width="1" height="1" fill="#FFFF00"/><rect x="11" y="6" width="1" height="1" fill="#F0F0C8"/><rect x="12" y="6" width="1" height="1" fill="#FFFF00"/><rect x="13" y="6" width="1" height="1" fill="#000"/><rect x="0" y="7" width="2" height="1" fill="#000"/><rect x="2" y="7" width="1" height="1" fill="#F0F0C8"/><rect x="3" y="7" width="1" height="1" fill="#FFFF00"/><rect x="4" y="7" width="1" height="1" fill="#F0F0C8"/><rect x="5" y="7" width="1" height="1" fill="#FFFF00"/><rect x="6" y="7" width="1" height="1" fill="#F0F0C8"/><rect x="7" y="7" width="1" height="1" fill="#FFFF00"/><rect x="8" y="7" width="1" height="1" fill="#F0F0C8"/><rect x="9" y="7" width="1" height="1" fill="#FFFF00"/><rect x="10" y="7" width="1" height="1" fill="#F0F0C8"/><rect x="11" y="7" width="1" height="1" fill="#FFFF00"/><rect x="12" y="7" width="1" height="1" fill="#000"/><rect x="1" y="8" width="1" height="1" fill="#000"/><rect x="2" y="8" width="1" height="1" fill="#FFFF00"/><rect x="3" y="8" width="1" height="1" fill="#F0F0C8"/><rect x="4" y="8" width="1" height="1" fill="#FFFF00"/><rect x="5" y="8" width="1" height="1" fill="#F0F0C8"/><rect x="6" y="8" width="1" height="1" fill="#FFFF00"/><rect x="7" y="8" width="1" height="1" fill="#F0F0C8"/><rect x="8" y="8" width="1" height="1" fill="#FFFF00"/><rect x="9" y="8" width="1" height="1" fill="#F0F0C8"/><rect x="10" y="8" width="1" height="1" fill="#FFFF00"/><rect x="11" y="8" width="1" height="1" fill="#000"/><rect x="1" y="9" width="11" height="1" fill="#000"/></svg>
<div class="tx" style="left:214.4px;top:255px;font-size:12.5px;color:#FFFFFF;transform:scaleX(0.9036);">Root\USA Branch\Office\</div>
<svg style="left:195px;top:268px;" width="16" height="17" viewBox="0 0 16 17" shape-rendering="crispEdges"><rect x="8" y="1" width="1" height="1" fill="#00FF00"/><rect x="8" y="2" width="1" height="1" fill="#00FF00"/><rect x="3" y="3" width="1" height="1" fill="#00FF00"/><rect x="6" y="3" width="5" height="1" fill="#00FF00"/><rect x="13" y="3" width="1" height="1" fill="#00FF00"/><rect x="4" y="4" width="9" height="1" fill="#00FF00"/><rect x="3" y="5" width="3" height="1" fill="#00FF00"/><rect x="6" y="5" width="5" height="1" fill="#000"/><rect x="11" y="5" width="3" height="1" fill="#00FF00"/><rect x="3" y="6" width="2" height="1" fill="#00FF00"/><rect x="5" y="6" width="1" height="1" fill="#000"/><rect x="6" y="6" width="1" height="1" fill="#F0F0F0"/><rect x="7" y="6" width="1" height="1" fill="#00FF00"/><rect x="8" y="6" width="1" height="1" fill="#F0F0F0"/><rect x="9" y="6" width="1" height="1" fill="#00FF00"/><rect x="10" y="6" width="1" height="1" fill="#F0F0F0"/><rect x="11" y="6" width="1" height="1" fill="#000"/><rect x="12" y="6" width="2" height="1" fill="#00FF00"/><rect x="3" y="7" width="2" height="1" fill="#00FF00"/><rect x="5" y="7" width="1" height="1" fill="#000"/><rect x="6" y="7" width="1" height="1" fill="#00FF00"/><rect x="7" y="7" width="1" height="1" fill="#F0F0F0"/><rect x="8" y="7" width="1" height="1" fill="#00FF00"/><rect x="9" y="7" width="1" height="1" fill="#F0F0F0"/><rect x="10" y="7" width="1" height="1" fill="#00FF00"/><rect x="11" y="7" width="1" height="1" fill="#000"/><rect x="12" y="7" width="2" height="1" fill="#00FF00"/><rect x="1" y="8" width="4" height="1" fill="#00FF00"/><rect x="5" y="8" width="1" height="1" fill="#000"/><rect x="6" y="8" width="1" height="1" fill="#F0F0F0"/><rect x="7" y="8" width="1" height="1" fill="#00FF00"/><rect x="8" y="8" width="1" height="1" fill="#F0F0F0"/><rect x="9" y="8" width="1" height="1" fill="#00FF00"/><rect x="10" y="8" width="1" height="1" fill="#F0F0F0"/><rect x="11" y="8" width="1" height="1" fill="#000"/><rect x="12" y="8" width="4" height="1" fill="#00FF00"/><rect x="3" y="9" width="2" height="1" fill="#00FF00"/><rect x="5" y="9" width="1" height="1" fill="#000"/><rect x="6" y="9" width="1" height="1" fill="#00FF00"/><rect x="7" y="9" width="1" height="1" fill="#F0F0F0"/><rect x="8" y="9" width="1" height="1" fill="#00FF00"/><rect x="9" y="9" width="1" height="1" fill="#F0F0F0"/><rect x="10" y="9" width="1" height="1" fill="#00FF00"/><rect x="11" y="9" width="1" height="1" fill="#000"/><rect x="12" y="9" width="2" height="1" fill="#00FF00"/><rect x="3" y="10" width="2" height="1" fill="#00FF00"/><rect x="5" y="10" width="1" height="1" fill="#000"/><rect x="6" y="10" width="1" height="1" fill="#F0F0F0"/><rect x="7" y="10" width="1" height="1" fill="#00FF00"/><rect x="8" y="10" width="1" height="1" fill="#F0F0F0"/><rect x="9" y="10" width="1" height="1" fill="#00FF00"/><rect x="10" y="10" width="1" height="1" fill="#F0F0F0"/><rect x="11" y="10" width="1" height="1" fill="#000"/><rect x="12" y="10" width="2" height="1" fill="#00FF00"/><rect x="3" y="11" width="3" height="1" fill="#00FF00"/><rect x="6" y="11" width="2" height="1" fill="#000"/><rect x="8" y="11" width="1" height="1" fill="#F0F0F0"/><rect x="9" y="11" width="2" height="1" fill="#000"/><rect x="11" y="11" width="3" height="1" fill="#00FF00"/><rect x="4" y="12" width="3" height="1" fill="#00FF00"/><rect x="7" y="12" width="1" height="1" fill="#000"/><rect x="8" y="12" width="1" height="1" fill="#00FF00"/><rect x="9" y="12" width="1" height="1" fill="#000"/><rect x="10" y="12" width="3" height="1" fill="#00FF00"/><rect x="3" y="13" width="1" height="1" fill="#00FF00"/><rect x="5" y="13" width="2" height="1" fill="#00FF00"/><rect x="7" y="13" width="3" height="1" fill="#000"/><rect x="10" y="13" width="2" height="1" fill="#00FF00"/><rect x="13" y="13" width="1" height="1" fill="#00FF00"/><rect x="7" y="14" width="1" height="1" fill="#000"/><rect x="8" y="14" width="1" height="1" fill="#F0F0F0"/><rect x="9" y="14" width="1" height="1" fill="#000"/><rect x="7" y="15" width="3" height="1" fill="#000"/><rect x="8" y="16" width="1" height="1" fill="#000"/></svg>
<div class="tx" style="left:214.4px;top:272px;font-size:12.5px;color:#FFFFFF;transform:scaleX(0.8405);">Free space: C: on localhost</div>
<div class="tx" style="left:440.54999999999995px;top:272px;font-size:12.5px;color:#FFFFFF;transform:scaleX(0.7471);">Ok</div>
<div class="tx" style="left:524.6899999999999px;top:272px;font-size:12.5px;color:#FFFFFF;transform:scaleX(0.82);">183</div>
<div class="tx" style="left:612.0px;top:272px;font-size:12.5px;color:#FFFFFF;transform:scaleX(0.8529);">65 Gb</div>
<div class="tx" style="left:695.5px;top:272px;font-size:12.5px;color:#FFFFFF;transform:scaleX(0.84);">Drive spa</div>
<svg style="left:195px;top:285px;" width="16" height="17" viewBox="0 0 16 17" shape-rendering="crispEdges"><rect x="8" y="1" width="1" height="1" fill="#00FF00"/><rect x="8" y="2" width="1" height="1" fill="#00FF00"/><rect x="3" y="3" width="1" height="1" fill="#00FF00"/><rect x="6" y="3" width="5" height="1" fill="#00FF00"/><rect x="13" y="3" width="1" height="1" fill="#00FF00"/><rect x="4" y="4" width="9" height="1" fill="#00FF00"/><rect x="3" y="5" width="3" height="1" fill="#00FF00"/><rect x="6" y="5" width="5" height="1" fill="#000"/><rect x="11" y="5" width="3" height="1" fill="#00FF00"/><rect x="3" y="6" width="2" height="1" fill="#00FF00"/><rect x="5" y="6" width="1" height="1" fill="#000"/><rect x="6" y="6" width="1" height="1" fill="#F0F0F0"/><rect x="7" y="6" width="1" height="1" fill="#00FF00"/><rect x="8" y="6" width="1" height="1" fill="#F0F0F0"/><rect x="9" y="6" width="1" height="1" fill="#00FF00"/><rect x="10" y="6" width="1" height="1" fill="#F0F0F0"/><rect x="11" y="6" width="1" height="1" fill="#000"/><rect x="12" y="6" width="2" height="1" fill="#00FF00"/><rect x="3" y="7" width="2" height="1" fill="#00FF00"/><rect x="5" y="7" width="1" height="1" fill="#000"/><rect x="6" y="7" width="1" height="1" fill="#00FF00"/><rect x="7" y="7" width="1" height="1" fill="#F0F0F0"/><rect x="8" y="7" width="1" height="1" fill="#00FF00"/><rect x="9" y="7" width="1" height="1" fill="#F0F0F0"/><rect x="10" y="7" width="1" height="1" fill="#00FF00"/><rect x="11" y="7" width="1" height="1" fill="#000"/><rect x="12" y="7" width="2" height="1" fill="#00FF00"/><rect x="1" y="8" width="4" height="1" fill="#00FF00"/><rect x="5" y="8" width="1" height="1" fill="#000"/><rect x="6" y="8" width="1" height="1" fill="#F0F0F0"/><rect x="7" y="8" width="1" height="1" fill="#00FF00"/><rect x="8" y="8" width="1" height="1" fill="#F0F0F0"/><rect x="9" y="8" width="1" height="1" fill="#00FF00"/><rect x="10" y="8" width="1" height="1" fill="#F0F0F0"/><rect x="11" y="8" width="1" height="1" fill="#000"/><rect x="12" y="8" width="4" height="1" fill="#00FF00"/><rect x="3" y="9" width="2" height="1" fill="#00FF00"/><rect x="5" y="9" width="1" height="1" fill="#000"/><rect x="6" y="9" width="1" height="1" fill="#00FF00"/><rect x="7" y="9" width="1" height="1" fill="#F0F0F0"/><rect x="8" y="9" width="1" height="1" fill="#00FF00"/><rect x="9" y="9" width="1" height="1" fill="#F0F0F0"/><rect x="10" y="9" width="1" height="1" fill="#00FF00"/><rect x="11" y="9" width="1" height="1" fill="#000"/><rect x="12" y="9" width="2" height="1" fill="#00FF00"/><rect x="3" y="10" width="2" height="1" fill="#00FF00"/><rect x="5" y="10" width="1" height="1" fill="#000"/><rect x="6" y="10" width="1" height="1" fill="#F0F0F0"/><rect x="7" y="10" width="1" height="1" fill="#00FF00"/><rect x="8" y="10" width="1" height="1" fill="#F0F0F0"/><rect x="9" y="10" width="1" height="1" fill="#00FF00"/><rect x="10" y="10" width="1" height="1" fill="#F0F0F0"/><rect x="11" y="10" width="1" height="1" fill="#000"/><rect x="12" y="10" width="2" height="1" fill="#00FF00"/><rect x="3" y="11" width="3" height="1" fill="#00FF00"/><rect x="6" y="11" width="2" height="1" fill="#000"/><rect x="8" y="11" width="1" height="1" fill="#F0F0F0"/><rect x="9" y="11" width="2" height="1" fill="#000"/><rect x="11" y="11" width="3" height="1" fill="#00FF00"/><rect x="4" y="12" width="3" height="1" fill="#00FF00"/><rect x="7" y="12" width="1" height="1" fill="#000"/><rect x="8" y="12" width="1" height="1" fill="#00FF00"/><rect x="9" y="12" width="1" height="1" fill="#000"/><rect x="10" y="12" width="3" height="1" fill="#00FF00"/><rect x="3" y="13" width="1" height="1" fill="#00FF00"/><rect x="5" y="13" width="2" height="1" fill="#00FF00"/><rect x="7" y="13" width="3" height="1" fill="#000"/><rect x="10" y="13" width="2" height="1" fill="#00FF00"/><rect x="13" y="13" width="1" height="1" fill="#00FF00"/><rect x="7" y="14" width="1" height="1" fill="#000"/><rect x="8" y="14" width="1" height="1" fill="#F0F0F0"/><rect x="9" y="14" width="1" height="1" fill="#000"/><rect x="7" y="15" width="3" height="1" fill="#000"/><rect x="8" y="16" width="1" height="1" fill="#000"/></svg>
<div class="tx" style="left:214.4px;top:289px;font-size:12.5px;color:#FFFFFF;transform:scaleX(0.847);">Free space: local on localhost</div>
<div class="tx" style="left:440.54999999999995px;top:289px;font-size:12.5px;color:#FFFFFF;transform:scaleX(0.7471);">Ok</div>
<div class="tx" style="left:527.56px;top:289px;font-size:12.5px;color:#FFFFFF;transform:scaleX(0.82);">42</div>
<div class="tx" style="left:612.0px;top:289px;font-size:12.5px;color:#FFFFFF;transform:scaleX(0.8529);">65 Gb</div>
<div class="tx" style="left:695.5px;top:289px;font-size:12.5px;color:#FFFFFF;transform:scaleX(0.84);">Drive spa</div>
<svg style="left:195px;top:302px;" width="16" height="17" viewBox="0 0 16 17" shape-rendering="crispEdges"><rect x="8" y="1" width="1" height="1" fill="#00FF00"/><rect x="8" y="2" width="1" height="1" fill="#00FF00"/><rect x="3" y="3" width="1" height="1" fill="#00FF00"/><rect x="6" y="3" width="5" height="1" fill="#00FF00"/><rect x="13" y="3" width="1" height="1" fill="#00FF00"/><rect x="4" y="4" width="9" height="1" fill="#00FF00"/><rect x="3" y="5" width="3" height="1" fill="#00FF00"/><rect x="6" y="5" width="5" height="1" fill="#000"/><rect x="11" y="5" width="3" height="1" fill="#00FF00"/><rect x="3" y="6" width="2" height="1" fill="#00FF00"/><rect x="5" y="6" width="1" height="1" fill="#000"/><rect x="6" y="6" width="1" height="1" fill="#F0F0F0"/><rect x="7" y="6" width="1" height="1" fill="#00FF00"/><rect x="8" y="6" width="1" height="1" fill="#F0F0F0"/><rect x="9" y="6" width="1" height="1" fill="#00FF00"/><rect x="10" y="6" width="1" height="1" fill="#F0F0F0"/><rect x="11" y="6" width="1" height="1" fill="#000"/><rect x="12" y="6" width="2" height="1" fill="#00FF00"/><rect x="3" y="7" width="2" height="1" fill="#00FF00"/><rect x="5" y="7" width="1" height="1" fill="#000"/><rect x="6" y="7" width="1" height="1" fill="#00FF00"/><rect x="7" y="7" width="1" height="1" fill="#F0F0F0"/><rect x="8" y="7" width="1" height="1" fill="#00FF00"/><rect x="9" y="7" width="1" height="1" fill="#F0F0F0"/><rect x="10" y="7" width="1" height="1" fill="#00FF00"/><rect x="11" y="7" width="1" height="1" fill="#000"/><rect x="12" y="7" width="2" height="1" fill="#00FF00"/><rect x="1" y="8" width="4" height="1" fill="#00FF00"/><rect x="5" y="8" width="1" height="1" fill="#000"/><rect x="6" y="8" width="1" height="1" fill="#F0F0F0"/><rect x="7" y="8" width="1" height="1" fill="#00FF00"/><rect x="8" y="8" width="1" height="1" fill="#F0F0F0"/><rect x="9" y="8" width="1" height="1" fill="#00FF00"/><rect x="10" y="8" width="1" height="1" fill="#F0F0F0"/><rect x="11" y="8" width="1" height="1" fill="#000"/><rect x="12" y="8" width="4" height="1" fill="#00FF00"/><rect x="3" y="9" width="2" height="1" fill="#00FF00"/><rect x="5" y="9" width="1" height="1" fill="#000"/><rect x="6" y="9" width="1" height="1" fill="#00FF00"/><rect x="7" y="9" width="1" height="1" fill="#F0F0F0"/><rect x="8" y="9" width="1" height="1" fill="#00FF00"/><rect x="9" y="9" width="1" height="1" fill="#F0F0F0"/><rect x="10" y="9" width="1" height="1" fill="#00FF00"/><rect x="11" y="9" width="1" height="1" fill="#000"/><rect x="12" y="9" width="2" height="1" fill="#00FF00"/><rect x="3" y="10" width="2" height="1" fill="#00FF00"/><rect x="5" y="10" width="1" height="1" fill="#000"/><rect x="6" y="10" width="1" height="1" fill="#F0F0F0"/><rect x="7" y="10" width="1" height="1" fill="#00FF00"/><rect x="8" y="10" width="1" height="1" fill="#F0F0F0"/><rect x="9" y="10" width="1" height="1" fill="#00FF00"/><rect x="10" y="10" width="1" height="1" fill="#F0F0F0"/><rect x="11" y="10" width="1" height="1" fill="#000"/><rect x="12" y="10" width="2" height="1" fill="#00FF00"/><rect x="3" y="11" width="3" height="1" fill="#00FF00"/><rect x="6" y="11" width="2" height="1" fill="#000"/><rect x="8" y="11" width="1" height="1" fill="#F0F0F0"/><rect x="9" y="11" width="2" height="1" fill="#000"/><rect x="11" y="11" width="3" height="1" fill="#00FF00"/><rect x="4" y="12" width="3" height="1" fill="#00FF00"/><rect x="7" y="12" width="1" height="1" fill="#000"/><rect x="8" y="12" width="1" height="1" fill="#00FF00"/><rect x="9" y="12" width="1" height="1" fill="#000"/><rect x="10" y="12" width="3" height="1" fill="#00FF00"/><rect x="3" y="13" width="1" height="1" fill="#00FF00"/><rect x="5" y="13" width="2" height="1" fill="#00FF00"/><rect x="7" y="13" width="3" height="1" fill="#000"/><rect x="10" y="13" width="2" height="1" fill="#00FF00"/><rect x="13" y="13" width="1" height="1" fill="#00FF00"/><rect x="7" y="14" width="1" height="1" fill="#000"/><rect x="8" y="14" width="1" height="1" fill="#F0F0F0"/><rect x="9" y="14" width="1" height="1" fill="#000"/><rect x="7" y="15" width="3" height="1" fill="#000"/><rect x="8" y="16" width="1" height="1" fill="#000"/></svg>
<div class="tx" style="left:214.4px;top:306px;font-size:12.5px;color:#FFFFFF;transform:scaleX(0.8466);">Free space: local,removable on loc...</div>
<div class="tx" style="left:440.54999999999995px;top:306px;font-size:12.5px;color:#FFFFFF;transform:scaleX(0.7471);">Ok</div>
<div class="tx" style="left:527.56px;top:306px;font-size:12.5px;color:#FFFFFF;transform:scaleX(0.82);">52</div>
<div class="tx" style="left:612.0px;top:306px;font-size:12.5px;color:#FFFFFF;transform:scaleX(0.8529);">65 Gb</div>
<div class="tx" style="left:695.5px;top:306px;font-size:12.5px;color:#FFFFFF;transform:scaleX(0.84);">Drive spa</div>
<div class="a" style="left:212px;top:320px;width:522px;height:17px;background:#0080FF;"></div>
<svg style="left:197px;top:322px;" width="15" height="10" viewBox="0 0 15 10" shape-rendering="crispEdges"><rect x="1" y="0" width="1" height="1" fill="#808080"/><rect x="2" y="0" width="4" height="1" fill="#000"/><rect x="6" y="0" width="1" height="1" fill="#808080"/><rect x="0" y="1" width="1" height="1" fill="#000"/><rect x="1" y="1" width="1" height="1" fill="#FFFF00"/><rect x="2" y="1" width="1" height="1" fill="#F0F0C8"/><rect x="3" y="1" width="1" height="1" fill="#FFFF00"/><rect x="4" y="1" width="1" height="1" fill="#F0F0C8"/><rect x="5" y="1" width="1" height="1" fill="#FFFF00"/><rect x="6" y="1" width="1" height="1" fill="#000"/><rect x="0" y="2" width="1" height="1" fill="#000"/><rect x="1" y="2" width="1" height="1" fill="#F0F0C8"/><rect x="2" y="2" width="1" height="1" fill="#FFFF00"/><rect x="3" y="2" width="1" height="1" fill="#F0F0C8"/><rect x="4" y="2" width="1" height="1" fill="#FFFF00"/><rect x="5" y="2" width="1" height="1" fill="#F0F0C8"/><rect x="6" y="2" width="1" height="1" fill="#FFFF00"/><rect x="7" y="2" width="5" height="1" fill="#000"/><rect x="0" y="3" width="1" height="1" fill="#000"/><rect x="1" y="3" width="1" height="1" fill="#FFFF00"/><rect x="2" y="3" width="1" height="1" fill="#F0F0C8"/><rect x="3" y="3" width="1" height="1" fill="#FFFF00"/><rect x="4" y="3" width="1" height="1" fill="#F0F0C8"/><rect x="5" y="3" width="1" height="1" fill="#FFFF00"/><rect x="6" y="3" width="1" height="1" fill="#F0F0C8"/><rect x="7" y="3" width="1" height="1" fill="#FFFF00"/><rect x="8" y="3" width="1" height="1" fill="#F0F0C8"/><rect x="9" y="3" width="1" height="1" fill="#FFFF00"/><rect x="10" y="3" width="1" height="1" fill="#F0F0C8"/><rect x="11" y="3" width="1" height="1" fill="#000"/><rect x="0" y="4" width="1" height="1" fill="#000"/><rect x="1" y="4" width="1" height="1" fill="#F0F0C8"/><rect x="2" y="4" width="1" height="1" fill="#FFFF00"/><rect x="3" y="4" width="1" height="1" fill="#F0F0C8"/><rect x="4" y="4" width="1" height="1" fill="#FFFF00"/><rect x="5" y="4" width="1" height="1" fill="#F0F0C8"/><rect x="6" y="4" width="1" height="1" fill="#FFFF00"/><rect x="7" y="4" width="1" height="1" fill="#F0F0C8"/><rect x="8" y="4" width="1" height="1" fill="#FFFF00"/><rect x="9" y="4" width="1" height="1" fill="#F0F0C8"/><rect x="10" y="4" width="1" height="1" fill="#FFFF00"/><rect x="11" y="4" width="1" height="1" fill="#000"/><rect x="0" y="5" width="1" height="1" fill="#000"/><rect x="1" y="5" width="1" height="1" fill="#FFFF00"/><rect x="2" y="5" width="1" height="1" fill="#F0F0C8"/><rect x="3" y="5" width="11" height="1" fill="#000"/><rect x="0" y="6" width="1" height="1" fill="#000"/><rect x="1" y="6" width="1" height="1" fill="#F0F0C8"/><rect x="2" y="6" width="1" height="1" fill="#000"/><rect x="3" y="6" width="1" height="1" fill="#F0F0C8"/><rect x="4" y="6" width="1" height="1" fill="#FFFF00"/><rect x="5" y="6" width="1" height="1" fill="#F0F0C8"/><rect x="6" y="6" width="1" height="1" fill="#FFFF00"/><rect x="7" y="6" width="1" height="1" fill="#F0F0C8"/><rect x="8" y="6" width="1" height="1" fill="#FFFF00"/><rect x="9" y="6" width="1" height="1" fill="#F0F0C8"/><rect x="10" y="6" width="1" height="1" fill="#FFFF00"/><rect x="11" y="6" width="1" height="1" fill="#F0F0C8"/><rect x="12" y="6" width="1" height="1" fill="#FFFF00"/><rect x="13" y="6" width="1" height="1" fill="#000"/><rect x="0" y="7" width="2" height="1" fill="#000"/><rect x="2" y="7" width="1" height="1" fill="#F0F0C8"/><rect x="3" y="7" width="1" height="1" fill="#FFFF00"/><rect x="4" y="7" width="1" height="1" fill="#F0F0C8"/><rect x="5" y="7" width="1" height="1" fill="#FFFF00"/><rect x="6" y="7" width="1" height="1" fill="#F0F0C8"/><rect x="7" y="7" width="1" height="1" fill="#FFFF00"/><rect x="8" y="7" width="1" height="1" fill="#F0F0C8"/><rect x="9" y="7" width="1" height="1" fill="#FFFF00"/><rect x="10" y="7" width="1" height="1" fill="#F0F0C8"/><rect x="11" y="7" width="1" height="1" fill="#FFFF00"/><rect x="12" y="7" width="1" height="1" fill="#000"/><rect x="1" y="8" width="1" height="1" fill="#000"/><rect x="2" y="8" width="1" height="1" fill="#FFFF00"/><rect x="3" y="8" width="1" height="1" fill="#F0F0C8"/><rect x="4" y="8" width="1" height="1" fill="#FFFF00"/><rect x="5" y="8" width="1" height="1" fill="#F0F0C8"/><rect x="6" y="8" width="1" height="1" fill="#FFFF00"/><rect x="7" y="8" width="1" height="1" fill="#F0F0C8"/><rect x="8" y="8" width="1" height="1" fill="#FFFF00"/><rect x="9" y="8" width="1" height="1" fill="#F0F0C8"/><rect x="10" y="8" width="1" height="1" fill="#FFFF00"/><rect x="11" y="8" width="1" height="1" fill="#000"/><rect x="1" y="9" width="11" height="1" fill="#000"/></svg>
<div class="tx" style="left:214.4px;top:323px;font-size:12.5px;color:#FFFFFF;transform:scaleX(0.8966);">Root\USA Branch\Support\</div>
<svg style="left:195px;top:337px;" width="16" height="16" viewBox="0 0 16 16" shape-rendering="crispEdges"><rect x="4" y="0" width="9" height="1" fill="#000"/><rect x="4" y="1" width="1" height="1" fill="#000"/><rect x="5" y="1" width="7" height="1" fill="#fff"/><rect x="12" y="1" width="1" height="1" fill="#000"/><rect x="4" y="2" width="1" height="1" fill="#000"/><rect x="5" y="2" width="1" height="1" fill="#fff"/><rect x="6" y="2" width="5" height="1" fill="#000"/><rect x="11" y="2" width="1" height="1" fill="#fff"/><rect x="12" y="2" width="1" height="1" fill="#000"/><rect x="4" y="3" width="1" height="1" fill="#000"/><rect x="5" y="3" width="1" height="1" fill="#fff"/><rect x="6" y="3" width="1" height="1" fill="#000"/><rect x="7" y="3" width="3" height="1" fill="#00FF00"/><rect x="10" y="3" width="1" height="1" fill="#000"/><rect x="11" y="3" width="1" height="1" fill="#fff"/><rect x="12" y="3" width="1" height="1" fill="#000"/><rect x="4" y="4" width="1" height="1" fill="#000"/><rect x="5" y="4" width="1" height="1" fill="#fff"/><rect x="6" y="4" width="1" height="1" fill="#000"/><rect x="7" y="4" width="3" height="1" fill="#00FF00"/><rect x="10" y="4" width="1" height="1" fill="#000"/><rect x="11" y="4" width="1" height="1" fill="#fff"/><rect x="12" y="4" width="1" height="1" fill="#000"/><rect x="4" y="5" width="1" height="1" fill="#000"/><rect x="5" y="5" width="1" height="1" fill="#fff"/><rect x="6" y="5" width="5" height="1" fill="#000"/><rect x="11" y="5" width="1" height="1" fill="#fff"/><rect x="12" y="5" width="1" height="1" fill="#000"/><rect x="4" y="6" width="1" height="1" fill="#000"/><rect x="5" y="6" width="7" height="1" fill="#fff"/><rect x="12" y="6" width="1" height="1" fill="#000"/><rect x="4" y="7" width="9" height="1" fill="#000"/><rect x="1" y="8" width="15" height="1" fill="#000"/><rect x="1" y="9" width="1" height="1" fill="#000"/><rect x="2" y="9" width="1" height="1" fill="#fff"/><rect x="3" y="9" width="1" height="1" fill="#FF0000"/><rect x="4" y="9" width="11" height="1" fill="#fff"/><rect x="15" y="9" width="1" height="1" fill="#000"/><rect x="1" y="10" width="1" height="1" fill="#000"/><rect x="2" y="10" width="1" height="1" fill="#fff"/><rect x="3" y="10" width="1" height="1" fill="#FF0000"/><rect x="4" y="10" width="7" height="1" fill="#fff"/><rect x="11" y="10" width="3" height="1" fill="#000"/><rect x="14" y="10" width="1" height="1" fill="#fff"/><rect x="15" y="10" width="1" height="1" fill="#000"/><rect x="1" y="11" width="1" height="1" fill="#000"/><rect x="2" y="11" width="3" height="1" fill="#fff"/><rect x="5" y="11" width="7" height="1" fill="#000"/><rect x="12" y="11" width="3" height="1" fill="#fff"/><rect x="15" y="11" width="1" height="1" fill="#000"/><rect x="1" y="12" width="4" height="1" fill="#000"/><rect x="5" y="12" width="8" height="1" fill="#fff"/><rect x="13" y="12" width="3" height="1" fill="#000"/><rect x="2" y="13" width="1" height="1" fill="#000"/><rect x="3" y="13" width="2" height="1" fill="#fff"/><rect x="5" y="13" width="1" height="1" fill="#000"/><rect x="6" y="13" width="1" height="1" fill="#fff"/><rect x="7" y="13" width="1" height="1" fill="#000"/><rect x="8" y="13" width="1" height="1" fill="#fff"/><rect x="9" y="13" width="1" height="1" fill="#000"/><rect x="10" y="13" width="1" height="1" fill="#fff"/><rect x="11" y="13" width="1" height="1" fill="#000"/><rect x="12" y="13" width="2" height="1" fill="#fff"/><rect x="14" y="13" width="1" height="1" fill="#000"/><rect x="2" y="14" width="1" height="1" fill="#000"/><rect x="3" y="14" width="11" height="1" fill="#fff"/><rect x="14" y="14" width="1" height="1" fill="#000"/><rect x="2" y="15" width="13" height="1" fill="#000"/></svg>
<div class="tx" style="left:214.4px;top:340px;font-size:12.5px;color:#FFFFFF;transform:scaleX(0.875);">173.194.111.100</div>
<div class="tx" style="left:418.75px;top:340px;font-size:12.5px;color:#FFFFFF;transform:scaleX(0.8403);">Host is alive</div>
<div class="tx" style="left:530.43px;top:340px;font-size:12.5px;color:#FFFFFF;transform:scaleX(0.82);">7</div>
<div class="tx" style="left:613.2px;top:340px;font-size:12.5px;color:#FFFFFF;transform:scaleX(0.76);">13 ms</div>
<div class="tx" style="left:695.5px;top:340px;font-size:12.5px;color:#FFFFFF;transform:scaleX(0.84);">ping (time</div>
<svg style="left:195px;top:354px;" width="16" height="16" viewBox="0 0 16 16" shape-rendering="crispEdges"><rect x="4" y="0" width="9" height="1" fill="#000"/><rect x="4" y="1" width="1" height="1" fill="#000"/><rect x="5" y="1" width="7" height="1" fill="#fff"/><rect x="12" y="1" width="1" height="1" fill="#000"/><rect x="4" y="2" width="1" height="1" fill="#000"/><rect x="5" y="2" width="1" height="1" fill="#fff"/><rect x="6" y="2" width="5" height="1" fill="#000"/><rect x="11" y="2" width="1" height="1" fill="#fff"/><rect x="12" y="2" width="1" height="1" fill="#000"/><rect x="4" y="3" width="1" height="1" fill="#000"/><rect x="5" y="3" width="1" height="1" fill="#fff"/><rect x="6" y="3" width="1" height="1" fill="#000"/><rect x="7" y="3" width="3" height="1" fill="#00FF00"/><rect x="10" y="3" width="1" height="1" fill="#000"/><rect x="11" y="3" width="1" height="1" fill="#fff"/><rect x="12" y="3" width="1" height="1" fill="#000"/><rect x="4" y="4" width="1" height="1" fill="#000"/><rect x="5" y="4" width="1" height="1" fill="#fff"/><rect x="6" y="4" width="1" height="1" fill="#000"/><rect x="7" y="4" width="3" height="1" fill="#00FF00"/><rect x="10" y="4" width="1" height="1" fill="#000"/><rect x="11" y="4" width="1" height="1" fill="#fff"/><rect x="12" y="4" width="1" height="1" fill="#000"/><rect x="4" y="5" width="1" height="1" fill="#000"/><rect x="5" y="5" width="1" height="1" fill="#fff"/><rect x="6" y="5" width="5" height="1" fill="#000"/><rect x="11" y="5" width="1" height="1" fill="#fff"/><rect x="12" y="5" width="1" height="1" fill="#000"/><rect x="4" y="6" width="1" height="1" fill="#000"/><rect x="5" y="6" width="7" height="1" fill="#fff"/><rect x="12" y="6" width="1" height="1" fill="#000"/><rect x="4" y="7" width="9" height="1" fill="#000"/><rect x="1" y="8" width="15" height="1" fill="#000"/><rect x="1" y="9" width="1" height="1" fill="#000"/><rect x="2" y="9" width="1" height="1" fill="#fff"/><rect x="3" y="9" width="1" height="1" fill="#FF0000"/><rect x="4" y="9" width="11" height="1" fill="#fff"/><rect x="15" y="9" width="1" height="1" fill="#000"/><rect x="1" y="10" width="1" height="1" fill="#000"/><rect x="2" y="10" width="1" height="1" fill="#fff"/><rect x="3" y="10" width="1" height="1" fill="#FF0000"/><rect x="4" y="10" width="7" height="1" fill="#fff"/><rect x="11" y="10" width="3" height="1" fill="#000"/><rect x="14" y="10" width="1" height="1" fill="#fff"/><rect x="15" y="10" width="1" height="1" fill="#000"/><rect x="1" y="11" width="1" height="1" fill="#000"/><rect x="2" y="11" width="3" height="1" fill="#fff"/><rect x="5" y="11" width="7" height="1" fill="#000"/><rect x="12" y="11" width="3" height="1" fill="#fff"/><rect x="15" y="11" width="1" height="1" fill="#000"/><rect x="1" y="12" width="4" height="1" fill="#000"/><rect x="5" y="12" width="8" height="1" fill="#fff"/><rect x="13" y="12" width="3" height="1" fill="#000"/><rect x="2" y="13" width="1" height="1" fill="#000"/><rect x="3" y="13" width="2" height="1" fill="#fff"/><rect x="5" y="13" width="1" height="1" fill="#000"/><rect x="6" y="13" width="1" height="1" fill="#fff"/><rect x="7" y="13" width="1" height="1" fill="#000"/><rect x="8" y="13" width="1" height="1" fill="#fff"/><rect x="9" y="13" width="1" height="1" fill="#000"/><rect x="10" y="13" width="1" height="1" fill="#fff"/><rect x="11" y="13" width="1" height="1" fill="#000"/><rect x="12" y="13" width="2" height="1" fill="#fff"/><rect x="14" y="13" width="1" height="1" fill="#000"/><rect x="2" y="14" width="1" height="1" fill="#000"/><rect x="3" y="14" width="11" height="1" fill="#fff"/><rect x="14" y="14" width="1" height="1" fill="#000"/><rect x="2" y="15" width="13" height="1" fill="#000"/></svg>
<div class="tx" style="left:214.4px;top:357px;font-size:12.5px;color:#FFFFFF;transform:scaleX(0.875);">173.194.111.101</div>
<div class="tx" style="left:418.75px;top:357px;font-size:12.5px;color:#FFFFFF;transform:scaleX(0.8403);">Host is alive</div>
<div class="tx" style="left:530.43px;top:357px;font-size:12.5px;color:#FFFFFF;transform:scaleX(0.82);">7</div>
<div class="tx" style="left:615.7px;top:357px;font-size:12.5px;color:#FFFFFF;transform:scaleX(0.7714);">6 ms</div>
<div class="tx" style="left:695.5px;top:357px;font-size:12.5px;color:#FFFFFF;transform:scaleX(0.84);">ping (time</div>
<svg style="left:195px;top:371px;" width="16" height="16" viewBox="0 0 16 16" shape-rendering="crispEdges"><rect x="4" y="0" width="9" height="1" fill="#000"/><rect x="4" y="1" width="1" height="1" fill="#000"/><rect x="5" y="1" width="7" height="1" fill="#fff"/><rect x="12" y="1" width="1" height="1" fill="#000"/><rect x="4" y="2" width="1" height="1" fill="#000"/><rect x="5" y="2" width="1" height="1" fill="#fff"/><rect x="6" y="2" width="5" height="1" fill="#000"/><rect x="11" y="2" width="1" height="1" fill="#fff"/><rect x="12" y="2" width="1" height="1" fill="#000"/><rect x="4" y="3" width="1" height="1" fill="#000"/><rect x="5" y="3" width="1" height="1" fill="#fff"/><rect x="6" y="3" width="1" height="1" fill="#000"/><rect x="7" y="3" width="3" height="1" fill="#00FF00"/><rect x="10" y="3" width="1" height="1" fill="#000"/><rect x="11" y="3" width="1" height="1" fill="#fff"/><rect x="12" y="3" width="1" height="1" fill="#000"/><rect x="4" y="4" width="1" height="1" fill="#000"/><rect x="5" y="4" width="1" height="1" fill="#fff"/><rect x="6" y="4" width="1" height="1" fill="#000"/><rect x="7" y="4" width="3" height="1" fill="#00FF00"/><rect x="10" y="4" width="1" height="1" fill="#000"/><rect x="11" y="4" width="1" height="1" fill="#fff"/><rect x="12" y="4" width="1" height="1" fill="#000"/><rect x="4" y="5" width="1" height="1" fill="#000"/><rect x="5" y="5" width="1" height="1" fill="#fff"/><rect x="6" y="5" width="5" height="1" fill="#000"/><rect x="11" y="5" width="1" height="1" fill="#fff"/><rect x="12" y="5" width="1" height="1" fill="#000"/><rect x="4" y="6" width="1" height="1" fill="#000"/><rect x="5" y="6" width="7" height="1" fill="#fff"/><rect x="12" y="6" width="1" height="1" fill="#000"/><rect x="4" y="7" width="9" height="1" fill="#000"/><rect x="1" y="8" width="15" height="1" fill="#000"/><rect x="1" y="9" width="1" height="1" fill="#000"/><rect x="2" y="9" width="1" height="1" fill="#fff"/><rect x="3" y="9" width="1" height="1" fill="#FF0000"/><rect x="4" y="9" width="11" height="1" fill="#fff"/><rect x="15" y="9" width="1" height="1" fill="#000"/><rect x="1" y="10" width="1" height="1" fill="#000"/><rect x="2" y="10" width="1" height="1" fill="#fff"/><rect x="3" y="10" width="1" height="1" fill="#FF0000"/><rect x="4" y="10" width="7" height="1" fill="#fff"/><rect x="11" y="10" width="3" height="1" fill="#000"/><rect x="14" y="10" width="1" height="1" fill="#fff"/><rect x="15" y="10" width="1" height="1" fill="#000"/><rect x="1" y="11" width="1" height="1" fill="#000"/><rect x="2" y="11" width="3" height="1" fill="#fff"/><rect x="5" y="11" width="7" height="1" fill="#000"/><rect x="12" y="11" width="3" height="1" fill="#fff"/><rect x="15" y="11" width="1" height="1" fill="#000"/><rect x="1" y="12" width="4" height="1" fill="#000"/><rect x="5" y="12" width="8" height="1" fill="#fff"/><rect x="13" y="12" width="3" height="1" fill="#000"/><rect x="2" y="13" width="1" height="1" fill="#000"/><rect x="3" y="13" width="2" height="1" fill="#fff"/><rect x="5" y="13" width="1" height="1" fill="#000"/><rect x="6" y="13" width="1" height="1" fill="#fff"/><rect x="7" y="13" width="1" height="1" fill="#000"/><rect x="8" y="13" width="1" height="1" fill="#fff"/><rect x="9" y="13" width="1" height="1" fill="#000"/><rect x="10" y="13" width="1" height="1" fill="#fff"/><rect x="11" y="13" width="1" height="1" fill="#000"/><rect x="12" y="13" width="2" height="1" fill="#fff"/><rect x="14" y="13" width="1" height="1" fill="#000"/><rect x="2" y="14" width="1" height="1" fill="#000"/><rect x="3" y="14" width="11" height="1" fill="#fff"/><rect x="14" y="14" width="1" height="1" fill="#000"/><rect x="2" y="15" width="13" height="1" fill="#000"/></svg>
<div class="tx" style="left:214.4px;top:374px;font-size:12.5px;color:#FFFFFF;transform:scaleX(0.875);">173.194.111.102</div>
<div class="tx" style="left:418.75px;top:374px;font-size:12.5px;color:#FFFFFF;transform:scaleX(0.8403);">Host is alive</div>
<div class="tx" style="left:530.43px;top:374px;font-size:12.5px;color:#FFFFFF;transform:scaleX(0.82);">7</div>
<div class="tx" style="left:615.7px;top:374px;font-size:12.5px;color:#FFFFFF;transform:scaleX(0.7714);">6 ms</div>
<div class="tx" style="left:695.5px;top:374px;font-size:12.5px;color:#FFFFFF;transform:scaleX(0.84);">ping (time</div>
<svg style="left:195px;top:388px;" width="16" height="16" viewBox="0 0 16 16" shape-rendering="crispEdges"><rect x="4" y="0" width="9" height="1" fill="#000"/><rect x="4" y="1" width="1" height="1" fill="#000"/><rect x="5" y="1" width="7" height="1" fill="#fff"/><rect x="12" y="1" width="1" height="1" fill="#000"/><rect x="4" y="2" width="1" height="1" fill="#000"/><rect x="5" y="2" width="1" height="1" fill="#fff"/><rect x="6" y="2" width="5" height="1" fill="#000"/><rect x="11" y="2" width="1" height="1" fill="#fff"/><rect x="12" y="2" width="1" height="1" fill="#000"/><rect x="4" y="3" width="1" height="1" fill="#000"/><rect x="5" y="3" width="1" height="1" fill="#fff"/><rect x="6" y="3" width="1" height="1" fill="#000"/><rect x="7" y="3" width="3" height="1" fill="#00FF00"/><rect x="10" y="3" width="1" height="1" fill="#000"/><rect x="11" y="3" width="1" height="1" fill="#fff"/><rect x="12" y="3" width="1" height="1" fill="#000"/><rect x="4" y="4" width="1" height="1" fill="#000"/><rect x="5" y="4" width="1" height="1" fill="#fff"/><rect x="6" y="4" width="1" height="1" fill="#000"/><rect x="7" y="4" width="3" height="1" fill="#00FF00"/><rect x="10" y="4" width="1" height="1" fill="#000"/><rect x="11" y="4" width="1" height="1" fill="#fff"/><rect x="12" y="4" width="1" height="1" fill="#000"/><rect x="4" y="5" width="1" height="1" fill="#000"/><rect x="5" y="5" width="1" height="1" fill="#fff"/><rect x="6" y="5" width="5" height="1" fill="#000"/><rect x="11" y="5" width="1" height="1" fill="#fff"/><rect x="12" y="5" width="1" height="1" fill="#000"/><rect x="4" y="6" width="1" height="1" fill="#000"/><rect x="5" y="6" width="7" height="1" fill="#fff"/><rect x="12" y="6" width="1" height="1" fill="#000"/><rect x="4" y="7" width="9" height="1" fill="#000"/><rect x="1" y="8" width="15" height="1" fill="#000"/><rect x="1" y="9" width="1" height="1" fill="#000"/><rect x="2" y="9" width="1" height="1" fill="#fff"/><rect x="3" y="9" width="1" height="1" fill="#FF0000"/><rect x="4" y="9" width="11" height="1" fill="#fff"/><rect x="15" y="9" width="1" height="1" fill="#000"/><rect x="1" y="10" width="1" height="1" fill="#000"/><rect x="2" y="10" width="1" height="1" fill="#fff"/><rect x="3" y="10" width="1" height="1" fill="#FF0000"/><rect x="4" y="10" width="7" height="1" fill="#fff"/><rect x="11" y="10" width="3" height="1" fill="#000"/><rect x="14" y="10" width="1" height="1" fill="#fff"/><rect x="15" y="10" width="1" height="1" fill="#000"/><rect x="1" y="11" width="1" height="1" fill="#000"/><rect x="2" y="11" width="3" height="1" fill="#fff"/><rect x="5" y="11" width="7" height="1" fill="#000"/><rect x="12" y="11" width="3" height="1" fill="#fff"/><rect x="15" y="11" width="1" height="1" fill="#000"/><rect x="1" y="12" width="4" height="1" fill="#000"/><rect x="5" y="12" width="8" height="1" fill="#fff"/><rect x="13" y="12" width="3" height="1" fill="#000"/><rect x="2" y="13" width="1" height="1" fill="#000"/><rect x="3" y="13" width="2" height="1" fill="#fff"/><rect x="5" y="13" width="1" height="1" fill="#000"/><rect x="6" y="13" width="1" height="1" fill="#fff"/><rect x="7" y="13" width="1" height="1" fill="#000"/><rect x="8" y="13" width="1" height="1" fill="#fff"/><rect x="9" y="13" width="1" height="1" fill="#000"/><rect x="10" y="13" width="1" height="1" fill="#fff"/><rect x="11" y="13" width="1" height="1" fill="#000"/><rect x="12" y="13" width="2" height="1" fill="#fff"/><rect x="14" y="13" width="1" height="1" fill="#000"/><rect x="2" y="14" width="1" height="1" fill="#000"/><rect x="3" y="14" width="11" height="1" fill="#fff"/><rect x="14" y="14" width="1" height="1" fill="#000"/><rect x="2" y="15" width="13" height="1" fill="#000"/></svg>
<div class="tx" style="left:214.4px;top:391px;font-size:12.5px;color:#FFFFFF;transform:scaleX(0.875);">173.194.111.103</div>
<div class="tx" style="left:418.75px;top:391px;font-size:12.5px;color:#FFFFFF;transform:scaleX(0.8403);">Host is alive</div>
<div class="tx" style="left:530.43px;top:391px;font-size:12.5px;color:#FFFFFF;transform:scaleX(0.82);">7</div>
<div class="tx" style="left:615.7px;top:391px;font-size:12.5px;color:#FFFFFF;transform:scaleX(0.7714);">6 ms</div>
<div class="tx" style="left:695.5px;top:391px;font-size:12.5px;color:#FFFFFF;transform:scaleX(0.84);">ping (time</div>
<svg style="left:195px;top:405px;" width="16" height="16" viewBox="0 0 16 16" shape-rendering="crispEdges"><rect x="4" y="0" width="9" height="1" fill="#000"/><rect x="4" y="1" width="1" height="1" fill="#000"/><rect x="5" y="1" width="7" height="1" fill="#fff"/><rect x="12" y="1" width="1" height="1" fill="#000"/><rect x="4" y="2" width="1" height="1" fill="#000"/><rect x="5" y="2" width="1" height="1" fill="#fff"/><rect x="6" y="2" width="5" height="1" fill="#000"/><rect x="11" y="2" width="1" height="1" fill="#fff"/><rect x="12" y="2" width="1" height="1" fill="#000"/><rect x="4" y="3" width="1" height="1" fill="#000"/><rect x="5" y="3" width="1" height="1" fill="#fff"/><rect x="6" y="3" width="1" height="1" fill="#000"/><rect x="7" y="3" width="3" height="1" fill="#00FF00"/><rect x="10" y="3" width="1" height="1" fill="#000"/><rect x="11" y="3" width="1" height="1" fill="#fff"/><rect x="12" y="3" width="1" height="1" fill="#000"/><rect x="4" y="4" width="1" height="1" fill="#000"/><rect x="5" y="4" width="1" height="1" fill="#fff"/><rect x="6" y="4" width="1" height="1" fill="#000"/><rect x="7" y="4" width="3" height="1" fill="#00FF00"/><rect x="10" y="4" width="1" height="1" fill="#000"/><rect x="11" y="4" width="1" height="1" fill="#fff"/><rect x="12" y="4" width="1" height="1" fill="#000"/><rect x="4" y="5" width="1" height="1" fill="#000"/><rect x="5" y="5" width="1" height="1" fill="#fff"/><rect x="6" y="5" width="5" height="1" fill="#000"/><rect x="11" y="5" width="1" height="1" fill="#fff"/><rect x="12" y="5" width="1" height="1" fill="#000"/><rect x="4" y="6" width="1" height="1" fill="#000"/><rect x="5" y="6" width="7" height="1" fill="#fff"/><rect x="12" y="6" width="1" height="1" fill="#000"/><rect x="4" y="7" width="9" height="1" fill="#000"/><rect x="1" y="8" width="15" height="1" fill="#000"/><rect x="1" y="9" width="1" height="1" fill="#000"/><rect x="2" y="9" width="1" height="1" fill="#fff"/><rect x="3" y="9" width="1" height="1" fill="#FF0000"/><rect x="4" y="9" width="11" height="1" fill="#fff"/><rect x="15" y="9" width="1" height="1" fill="#000"/><rect x="1" y="10" width="1" height="1" fill="#000"/><rect x="2" y="10" width="1" height="1" fill="#fff"/><rect x="3" y="10" width="1" height="1" fill="#FF0000"/><rect x="4" y="10" width="7" height="1" fill="#fff"/><rect x="11" y="10" width="3" height="1" fill="#000"/><rect x="14" y="10" width="1" height="1" fill="#fff"/><rect x="15" y="10" width="1" height="1" fill="#000"/><rect x="1" y="11" width="1" height="1" fill="#000"/><rect x="2" y="11" width="3" height="1" fill="#fff"/><rect x="5" y="11" width="7" height="1" fill="#000"/><rect x="12" y="11" width="3" height="1" fill="#fff"/><rect x="15" y="11" width="1" height="1" fill="#000"/><rect x="1" y="12" width="4" height="1" fill="#000"/><rect x="5" y="12" width="8" height="1" fill="#fff"/><rect x="13" y="12" width="3" height="1" fill="#000"/><rect x="2" y="13" width="1" height="1" fill="#000"/><rect x="3" y="13" width="2" height="1" fill="#fff"/><rect x="5" y="13" width="1" height="1" fill="#000"/><rect x="6" y="13" width="1" height="1" fill="#fff"/><rect x="7" y="13" width="1" height="1" fill="#000"/><rect x="8" y="13" width="1" height="1" fill="#fff"/><rect x="9" y="13" width="1" height="1" fill="#000"/><rect x="10" y="13" width="1" height="1" fill="#fff"/><rect x="11" y="13" width="1" height="1" fill="#000"/><rect x="12" y="13" width="2" height="1" fill="#fff"/><rect x="14" y="13" width="1" height="1" fill="#000"/><rect x="2" y="14" width="1" height="1" fill="#000"/><rect x="3" y="14" width="11" height="1" fill="#fff"/><rect x="14" y="14" width="1" height="1" fill="#000"/><rect x="2" y="15" width="13" height="1" fill="#000"/></svg>
<div class="tx" style="left:214.4px;top:408px;font-size:12.5px;color:#FFFFFF;transform:scaleX(0.875);">173.194.111.104</div>
<div class="tx" style="left:418.75px;top:408px;font-size:12.5px;color:#FFFFFF;transform:scaleX(0.8403);">Host is alive</div>
<div class="tx" style="left:530.43px;top:408px;font-size:12.5px;color:#FFFFFF;transform:scaleX(0.82);">7</div>
<div class="tx" style="left:615.7px;top:408px;font-size:12.5px;color:#FFFFFF;transform:scaleX(0.7714);">6 ms</div>
<div class="tx" style="left:695.5px;top:408px;font-size:12.5px;color:#FFFFFF;transform:scaleX(0.84);">ping (time</div>
<svg style="left:195px;top:422px;" width="16" height="16" viewBox="0 0 16 16" shape-rendering="crispEdges"><rect x="4" y="0" width="9" height="1" fill="#000"/><rect x="4" y="1" width="1" height="1" fill="#000"/><rect x="5" y="1" width="7" height="1" fill="#fff"/><rect x="12" y="1" width="1" height="1" fill="#000"/><rect x="4" y="2" width="1" height="1" fill="#000"/><rect x="5" y="2" width="1" height="1" fill="#fff"/><rect x="6" y="2" width="5" height="1" fill="#000"/><rect x="11" y="2" width="1" height="1" fill="#fff"/><rect x="12" y="2" width="1" height="1" fill="#000"/><rect x="4" y="3" width="1" height="1" fill="#000"/><rect x="5" y="3" width="1" height="1" fill="#fff"/><rect x="6" y="3" width="1" height="1" fill="#000"/><rect x="7" y="3" width="3" height="1" fill="#00FF00"/><rect x="10" y="3" width="1" height="1" fill="#000"/><rect x="11" y="3" width="1" height="1" fill="#fff"/><rect x="12" y="3" width="1" height="1" fill="#000"/><rect x="4" y="4" width="1" height="1" fill="#000"/><rect x="5" y="4" width="1" height="1" fill="#fff"/><rect x="6" y="4" width="1" height="1" fill="#000"/><rect x="7" y="4" width="3" height="1" fill="#00FF00"/><rect x="10" y="4" width="1" height="1" fill="#000"/><rect x="11" y="4" width="1" height="1" fill="#fff"/><rect x="12" y="4" width="1" height="1" fill="#000"/><rect x="4" y="5" width="1" height="1" fill="#000"/><rect x="5" y="5" width="1" height="1" fill="#fff"/><rect x="6" y="5" width="5" height="1" fill="#000"/><rect x="11" y="5" width="1" height="1" fill="#fff"/><rect x="12" y="5" width="1" height="1" fill="#000"/><rect x="4" y="6" width="1" height="1" fill="#000"/><rect x="5" y="6" width="7" height="1" fill="#fff"/><rect x="12" y="6" width="1" height="1" fill="#000"/><rect x="4" y="7" width="9" height="1" fill="#000"/><rect x="1" y="8" width="15" height="1" fill="#000"/><rect x="1" y="9" width="1" height="1" fill="#000"/><rect x="2" y="9" width="1" height="1" fill="#fff"/><rect x="3" y="9" width="1" height="1" fill="#FF0000"/><rect x="4" y="9" width="11" height="1" fill="#fff"/><rect x="15" y="9" width="1" height="1" fill="#000"/><rect x="1" y="10" width="1" height="1" fill="#000"/><rect x="2" y="10" width="1" height="1" fill="#fff"/><rect x="3" y="10" width="1" height="1" fill="#FF0000"/><rect x="4" y="10" width="7" height="1" fill="#fff"/><rect x="11" y="10" width="3" height="1" fill="#000"/><rect x="14" y="10" width="1" height="1" fill="#fff"/><rect x="15" y="10" width="1" height="1" fill="#000"/><rect x="1" y="11" width="1" height="1" fill="#000"/><rect x="2" y="11" width="3" height="1" fill="#fff"/><rect x="5" y="11" width="7" height="1" fill="#000"/><rect x="12" y="11" width="3" height="1" fill="#fff"/><rect x="15" y="11" width="1" height="1" fill="#000"/><rect x="1" y="12" width="4" height="1" fill="#000"/><rect x="5" y="12" width="8" height="1" fill="#fff"/><rect x="13" y="12" width="3" height="1" fill="#000"/><rect x="2" y="13" width="1" height="1" fill="#000"/><rect x="3" y="13" width="2" height="1" fill="#fff"/><rect x="5" y="13" width="1" height="1" fill="#000"/><rect x="6" y="13" width="1" height="1" fill="#fff"/><rect x="7" y="13" width="1" height="1" fill="#000"/><rect x="8" y="13" width="1" height="1" fill="#fff"/><rect x="9" y="13" width="1" height="1" fill="#000"/><rect x="10" y="13" width="1" height="1" fill="#fff"/><rect x="11" y="13" width="1" height="1" fill="#000"/><rect x="12" y="13" width="2" height="1" fill="#fff"/><rect x="14" y="13" width="1" height="1" fill="#000"/><rect x="2" y="14" width="1" height="1" fill="#000"/><rect x="3" y="14" width="11" height="1" fill="#fff"/><rect x="14" y="14" width="1" height="1" fill="#000"/><rect x="2" y="15" width="13" height="1" fill="#000"/></svg>
<div class="tx" style="left:214.4px;top:425px;font-size:12.5px;color:#FFFFFF;transform:scaleX(0.875);">173.194.111.105</div>
<div class="tx" style="left:418.75px;top:425px;font-size:12.5px;color:#FFFFFF;transform:scaleX(0.8403);">Host is alive</div>
<div class="tx" style="left:530.43px;top:425px;font-size:12.5px;color:#FFFFFF;transform:scaleX(0.82);">7</div>
<div class="tx" style="left:615.7px;top:425px;font-size:12.5px;color:#FFFFFF;transform:scaleX(0.7714);">6 ms</div>
<div class="tx" style="left:695.5px;top:425px;font-size:12.5px;color:#FFFFFF;transform:scaleX(0.84);">ping (time</div>
<svg style="left:195px;top:439px;" width="16" height="16" viewBox="0 0 16 16" shape-rendering="crispEdges"><rect x="4" y="0" width="9" height="1" fill="#000"/><rect x="4" y="1" width="1" height="1" fill="#000"/><rect x="5" y="1" width="7" height="1" fill="#fff"/><rect x="12" y="1" width="1" height="1" fill="#000"/><rect x="4" y="2" width="1" height="1" fill="#000"/><rect x="5" y="2" width="1" height="1" fill="#fff"/><rect x="6" y="2" width="5" height="1" fill="#000"/><rect x="11" y="2" width="1" height="1" fill="#fff"/><rect x="12" y="2" width="1" height="1" fill="#000"/><rect x="4" y="3" width="1" height="1" fill="#000"/><rect x="5" y="3" width="1" height="1" fill="#fff"/><rect x="6" y="3" width="1" height="1" fill="#000"/><rect x="7" y="3" width="3" height="1" fill="#00FF00"/><rect x="10" y="3" width="1" height="1" fill="#000"/><rect x="11" y="3" width="1" height="1" fill="#fff"/><rect x="12" y="3" width="1" height="1" fill="#000"/><rect x="4" y="4" width="1" height="1" fill="#000"/><rect x="5" y="4" width="1" height="1" fill="#fff"/><rect x="6" y="4" width="1" height="1" fill="#000"/><rect x="7" y="4" width="3" height="1" fill="#00FF00"/><rect x="10" y="4" width="1" height="1" fill="#000"/><rect x="11" y="4" width="1" height="1" fill="#fff"/><rect x="12" y="4" width="1" height="1" fill="#000"/><rect x="4" y="5" width="1" height="1" fill="#000"/><rect x="5" y="5" width="1" height="1" fill="#fff"/><rect x="6" y="5" width="5" height="1" fill="#000"/><rect x="11" y="5" width="1" height="1" fill="#fff"/><rect x="12" y="5" width="1" height="1" fill="#000"/><rect x="4" y="6" width="1" height="1" fill="#000"/><rect x="5" y="6" width="7" height="1" fill="#fff"/><rect x="12" y="6" width="1" height="1" fill="#000"/><rect x="4" y="7" width="9" height="1" fill="#000"/><rect x="1" y="8" width="15" height="1" fill="#000"/><rect x="1" y="9" width="1" height="1" fill="#000"/><rect x="2" y="9" width="1" height="1" fill="#fff"/><rect x="3" y="9" width="1" height="1" fill="#FF0000"/><rect x="4" y="9" width="11" height="1" fill="#fff"/><rect x="15" y="9" width="1" height="1" fill="#000"/><rect x="1" y="10" width="1" height="1" fill="#000"/><rect x="2" y="10" width="1" height="1" fill="#fff"/><rect x="3" y="10" width="1" height="1" fill="#FF0000"/><rect x="4" y="10" width="7" height="1" fill="#fff"/><rect x="11" y="10" width="3" height="1" fill="#000"/><rect x="14" y="10" width="1" height="1" fill="#fff"/><rect x="15" y="10" width="1" height="1" fill="#000"/><rect x="1" y="11" width="1" height="1" fill="#000"/><rect x="2" y="11" width="3" height="1" fill="#fff"/><rect x="5" y="11" width="7" height="1" fill="#000"/><rect x="12" y="11" width="3" height="1" fill="#fff"/><rect x="15" y="11" width="1" height="1" fill="#000"/><rect x="1" y="12" width="4" height="1" fill="#000"/><rect x="5" y="12" width="8" height="1" fill="#fff"/><rect x="13" y="12" width="3" height="1" fill="#000"/><rect x="2" y="13" width="1" height="1" fill="#000"/><rect x="3" y="13" width="2" height="1" fill="#fff"/><rect x="5" y="13" width="1" height="1" fill="#000"/><rect x="6" y="13" width="1" height="1" fill="#fff"/><rect x="7" y="13" width="1" height="1" fill="#000"/><rect x="8" y="13" width="1" height="1" fill="#fff"/><rect x="9" y="13" width="1" height="1" fill="#000"/><rect x="10" y="13" width="1" height="1" fill="#fff"/><rect x="11" y="13" width="1" height="1" fill="#000"/><rect x="12" y="13" width="2" height="1" fill="#fff"/><rect x="14" y="13" width="1" height="1" fill="#000"/><rect x="2" y="14" width="1" height="1" fill="#000"/><rect x="3" y="14" width="11" height="1" fill="#fff"/><rect x="14" y="14" width="1" height="1" fill="#000"/><rect x="2" y="15" width="13" height="1" fill="#000"/></svg>
<div class="tx" style="left:214.4px;top:442px;font-size:12.5px;color:#FFFFFF;transform:scaleX(0.875);">173.194.111.106</div>
<div class="tx" style="left:418.75px;top:442px;font-size:12.5px;color:#FFFFFF;transform:scaleX(0.8403);">Host is alive</div>
<div class="tx" style="left:530.43px;top:442px;font-size:12.5px;color:#FFFFFF;transform:scaleX(0.82);">7</div>
<div class="tx" style="left:615.7px;top:442px;font-size:12.5px;color:#FFFFFF;transform:scaleX(0.7714);">6 ms</div>
<div class="tx" style="left:695.5px;top:442px;font-size:12.5px;color:#FFFFFF;transform:scaleX(0.84);">ping (time</div>
<svg style="left:195px;top:456px;" width="16" height="16" viewBox="0 0 16 16" shape-rendering="crispEdges"><rect x="4" y="0" width="9" height="1" fill="#000"/><rect x="4" y="1" width="1" height="1" fill="#000"/><rect x="5" y="1" width="7" height="1" fill="#fff"/><rect x="12" y="1" width="1" height="1" fill="#000"/><rect x="4" y="2" width="1" height="1" fill="#000"/><rect x="5" y="2" width="1" height="1" fill="#fff"/><rect x="6" y="2" width="5" height="1" fill="#000"/><rect x="11" y="2" width="1" height="1" fill="#fff"/><rect x="12" y="2" width="1" height="1" fill="#000"/><rect x="4" y="3" width="1" height="1" fill="#000"/><rect x="5" y="3" width="1" height="1" fill="#fff"/><rect x="6" y="3" width="1" height="1" fill="#000"/><rect x="7" y="3" width="3" height="1" fill="#00FF00"/><rect x="10" y="3" width="1" height="1" fill="#000"/><rect x="11" y="3" width="1" height="1" fill="#fff"/><rect x="12" y="3" width="1" height="1" fill="#000"/><rect x="4" y="4" width="1" height="1" fill="#000"/><rect x="5" y="4" width="1" height="1" fill="#fff"/><rect x="6" y="4" width="1" height="1" fill="#000"/><rect x="7" y="4" width="3" height="1" fill="#00FF00"/><rect x="10" y="4" width="1" height="1" fill="#000"/><rect x="11" y="4" width="1" height="1" fill="#fff"/><rect x="12" y="4" width="1" height="1" fill="#000"/><rect x="4" y="5" width="1" height="1" fill="#000"/><rect x="5" y="5" width="1" height="1" fill="#fff"/><rect x="6" y="5" width="5" height="1" fill="#000"/><rect x="11" y="5" width="1" height="1" fill="#fff"/><rect x="12" y="5" width="1" height="1" fill="#000"/><rect x="4" y="6" width="1" height="1" fill="#000"/><rect x="5" y="6" width="7" height="1" fill="#fff"/><rect x="12" y="6" width="1" height="1" fill="#000"/><rect x="4" y="7" width="9" height="1" fill="#000"/><rect x="1" y="8" width="15" height="1" fill="#000"/><rect x="1" y="9" width="1" height="1" fill="#000"/><rect x="2" y="9" width="1" height="1" fill="#fff"/><rect x="3" y="9" width="1" height="1" fill="#FF0000"/><rect x="4" y="9" width="11" height="1" fill="#fff"/><rect x="15" y="9" width="1" height="1" fill="#000"/><rect x="1" y="10" width="1" height="1" fill="#000"/><rect x="2" y="10" width="1" height="1" fill="#fff"/><rect x="3" y="10" width="1" height="1" fill="#FF0000"/><rect x="4" y="10" width="7" height="1" fill="#fff"/><rect x="11" y="10" width="3" height="1" fill="#000"/><rect x="14" y="10" width="1" height="1" fill="#fff"/><rect x="15" y="10" width="1" height="1" fill="#000"/><rect x="1" y="11" width="1" height="1" fill="#000"/><rect x="2" y="11" width="3" height="1" fill="#fff"/><rect x="5" y="11" width="7" height="1" fill="#000"/><rect x="12" y="11" width="3" height="1" fill="#fff"/><rect x="15" y="11" width="1" height="1" fill="#000"/><rect x="1" y="12" width="4" height="1" fill="#000"/><rect x="5" y="12" width="8" height="1" fill="#fff"/><rect x="13" y="12" width="3" height="1" fill="#000"/><rect x="2" y="13" width="1" height="1" fill="#000"/><rect x="3" y="13" width="2" height="1" fill="#fff"/><rect x="5" y="13" width="1" height="1" fill="#000"/><rect x="6" y="13" width="1" height="1" fill="#fff"/><rect x="7" y="13" width="1" height="1" fill="#000"/><rect x="8" y="13" width="1" height="1" fill="#fff"/><rect x="9" y="13" width="1" height="1" fill="#000"/><rect x="10" y="13" width="1" height="1" fill="#fff"/><rect x="11" y="13" width="1" height="1" fill="#000"/><rect x="12" y="13" width="2" height="1" fill="#fff"/><rect x="14" y="13" width="1" height="1" fill="#000"/><rect x="2" y="14" width="1" height="1" fill="#000"/><rect x="3" y="14" width="11" height="1" fill="#fff"/><rect x="14" y="14" width="1" height="1" fill="#000"/><rect x="2" y="15" width="13" height="1" fill="#000"/></svg>
<div class="tx" style="left:214.4px;top:459px;font-size:12.5px;color:#FFFFFF;transform:scaleX(0.875);">173.194.111.107</div>
<div class="tx" style="left:418.75px;top:459px;font-size:12.5px;color:#FFFFFF;transform:scaleX(0.8403);">Host is alive</div>
<div class="tx" style="left:530.43px;top:459px;font-size:12.5px;color:#FFFFFF;transform:scaleX(0.82);">7</div>
<div class="tx" style="left:615.7px;top:459px;font-size:12.5px;color:#FFFFFF;transform:scaleX(0.7714);">6 ms</div>
<div class="tx" style="left:695.5px;top:459px;font-size:12.5px;color:#FFFFFF;transform:scaleX(0.84);">ping (time</div>
<svg style="left:195px;top:473px;" width="16" height="16" viewBox="0 0 16 16" shape-rendering="crispEdges"><rect x="4" y="0" width="9" height="1" fill="#000"/><rect x="4" y="1" width="1" height="1" fill="#000"/><rect x="5" y="1" width="7" height="1" fill="#fff"/><rect x="12" y="1" width="1" height="1" fill="#000"/><rect x="4" y="2" width="1" height="1" fill="#000"/><rect x="5" y="2" width="1" height="1" fill="#fff"/><rect x="6" y="2" width="5" height="1" fill="#000"/><rect x="11" y="2" width="1" height="1" fill="#fff"/><rect x="12" y="2" width="1" height="1" fill="#000"/><rect x="4" y="3" width="1" height="1" fill="#000"/><rect x="5" y="3" width="1" height="1" fill="#fff"/><rect x="6" y="3" width="1" height="1" fill="#000"/><rect x="7" y="3" width="3" height="1" fill="#00FF00"/><rect x="10" y="3" width="1" height="1" fill="#000"/><rect x="11" y="3" width="1" height="1" fill="#fff"/><rect x="12" y="3" width="1" height="1" fill="#000"/><rect x="4" y="4" width="1" height="1" fill="#000"/><rect x="5" y="4" width="1" height="1" fill="#fff"/><rect x="6" y="4" width="1" height="1" fill="#000"/><rect x="7" y="4" width="3" height="1" fill="#00FF00"/><rect x="10" y="4" width="1" height="1" fill="#000"/><rect x="11" y="4" width="1" height="1" fill="#fff"/><rect x="12" y="4" width="1" height="1" fill="#000"/><rect x="4" y="5" width="1" height="1" fill="#000"/><rect x="5" y="5" width="1" height="1" fill="#fff"/><rect x="6" y="5" width="5" height="1" fill="#000"/><rect x="11" y="5" width="1" height="1" fill="#fff"/><rect x="12" y="5" width="1" height="1" fill="#000"/><rect x="4" y="6" width="1" height="1" fill="#000"/><rect x="5" y="6" width="7" height="1" fill="#fff"/><rect x="12" y="6" width="1" height="1" fill="#000"/><rect x="4" y="7" width="9" height="1" fill="#000"/><rect x="1" y="8" width="15" height="1" fill="#000"/><rect x="1" y="9" width="1" height="1" fill="#000"/><rect x="2" y="9" width="1" height="1" fill="#fff"/><rect x="3" y="9" width="1" height="1" fill="#FF0000"/><rect x="4" y="9" width="11" height="1" fill="#fff"/><rect x="15" y="9" width="1" height="1" fill="#000"/><rect x="1" y="10" width="1" height="1" fill="#000"/><rect x="2" y="10" width="1" height="1" fill="#fff"/><rect x="3" y="10" width="1" height="1" fill="#FF0000"/><rect x="4" y="10" width="7" height="1" fill="#fff"/><rect x="11" y="10" width="3" height="1" fill="#000"/><rect x="14" y="10" width="1" height="1" fill="#fff"/><rect x="15" y="10" width="1" height="1" fill="#000"/><rect x="1" y="11" width="1" height="1" fill="#000"/><rect x="2" y="11" width="3" height="1" fill="#fff"/><rect x="5" y="11" width="7" height="1" fill="#000"/><rect x="12" y="11" width="3" height="1" fill="#fff"/><rect x="15" y="11" width="1" height="1" fill="#000"/><rect x="1" y="12" width="4" height="1" fill="#000"/><rect x="5" y="12" width="8" height="1" fill="#fff"/><rect x="13" y="12" width="3" height="1" fill="#000"/><rect x="2" y="13" width="1" height="1" fill="#000"/><rect x="3" y="13" width="2" height="1" fill="#fff"/><rect x="5" y="13" width="1" height="1" fill="#000"/><rect x="6" y="13" width="1" height="1" fill="#fff"/><rect x="7" y="13" width="1" height="1" fill="#000"/><rect x="8" y="13" width="1" height="1" fill="#fff"/><rect x="9" y="13" width="1" height="1" fill="#000"/><rect x="10" y="13" width="1" height="1" fill="#fff"/><rect x="11" y="13" width="1" height="1" fill="#000"/><rect x="12" y="13" width="2" height="1" fill="#fff"/><rect x="14" y="13" width="1" height="1" fill="#000"/><rect x="2" y="14" width="1" height="1" fill="#000"/><rect x="3" y="14" width="11" height="1" fill="#fff"/><rect x="14" y="14" width="1" height="1" fill="#000"/><rect x="2" y="15" width="13" height="1" fill="#000"/></svg>
<div class="tx" style="left:214.4px;top:476px;font-size:12.5px;color:#FFFFFF;transform:scaleX(0.875);">173.194.111.108</div>
<div class="tx" style="left:418.75px;top:476px;font-size:12.5px;color:#FFFFFF;transform:scaleX(0.8403);">Host is alive</div>
<div class="tx" style="left:530.43px;top:476px;font-size:12.5px;color:#FFFFFF;transform:scaleX(0.82);">7</div>
<div class="tx" style="left:615.7px;top:476px;font-size:12.5px;color:#FFFFFF;transform:scaleX(0.7714);">5 ms</div>
<div class="tx" style="left:695.5px;top:476px;font-size:12.5px;color:#FFFFFF;transform:scaleX(0.84);">ping (time</div>
<svg style="left:195px;top:490px;" width="16" height="16" viewBox="0 0 16 16" shape-rendering="crispEdges"><rect x="4" y="0" width="9" height="1" fill="#000"/><rect x="4" y="1" width="1" height="1" fill="#000"/><rect x="5" y="1" width="7" height="1" fill="#fff"/><rect x="12" y="1" width="1" height="1" fill="#000"/><rect x="4" y="2" width="1" height="1" fill="#000"/><rect x="5" y="2" width="1" height="1" fill="#fff"/><rect x="6" y="2" width="5" height="1" fill="#000"/><rect x="11" y="2" width="1" height="1" fill="#fff"/><rect x="12" y="2" width="1" height="1" fill="#000"/><rect x="4" y="3" width="1" height="1" fill="#000"/><rect x="5" y="3" width="1" height="1" fill="#fff"/><rect x="6" y="3" width="1" height="1" fill="#000"/><rect x="7" y="3" width="3" height="1" fill="#00FF00"/><rect x="10" y="3" width="1" height="1" fill="#000"/><rect x="11" y="3" width="1" height="1" fill="#fff"/><rect x="12" y="3" width="1" height="1" fill="#000"/><rect x="4" y="4" width="1" height="1" fill="#000"/><rect x="5" y="4" width="1" height="1" fill="#fff"/><rect x="6" y="4" width="1" height="1" fill="#000"/><rect x="7" y="4" width="3" height="1" fill="#00FF00"/><rect x="10" y="4" width="1" height="1" fill="#000"/><rect x="11" y="4" width="1" height="1" fill="#fff"/><rect x="12" y="4" width="1" height="1" fill="#000"/><rect x="4" y="5" width="1" height="1" fill="#000"/><rect x="5" y="5" width="1" height="1" fill="#fff"/><rect x="6" y="5" width="5" height="1" fill="#000"/><rect x="11" y="5" width="1" height="1" fill="#fff"/><rect x="12" y="5" width="1" height="1" fill="#000"/><rect x="4" y="6" width="1" height="1" fill="#000"/><rect x="5" y="6" width="7" height="1" fill="#fff"/><rect x="12" y="6" width="1" height="1" fill="#000"/><rect x="4" y="7" width="9" height="1" fill="#000"/><rect x="1" y="8" width="15" height="1" fill="#000"/><rect x="1" y="9" width="1" height="1" fill="#000"/><rect x="2" y="9" width="1" height="1" fill="#fff"/><rect x="3" y="9" width="1" height="1" fill="#FF0000"/><rect x="4" y="9" width="11" height="1" fill="#fff"/><rect x="15" y="9" width="1" height="1" fill="#000"/><rect x="1" y="10" width="1" height="1" fill="#000"/><rect x="2" y="10" width="1" height="1" fill="#fff"/><rect x="3" y="10" width="1" height="1" fill="#FF0000"/><rect x="4" y="10" width="7" height="1" fill="#fff"/><rect x="11" y="10" width="3" height="1" fill="#000"/><rect x="14" y="10" width="1" height="1" fill="#fff"/><rect x="15" y="10" width="1" height="1" fill="#000"/><rect x="1" y="11" width="1" height="1" fill="#000"/><rect x="2" y="11" width="3" height="1" fill="#fff"/><rect x="5" y="11" width="7" height="1" fill="#000"/><rect x="12" y="11" width="3" height="1" fill="#fff"/><rect x="15" y="11" width="1" height="1" fill="#000"/><rect x="1" y="12" width="4" height="1" fill="#000"/><rect x="5" y="12" width="8" height="1" fill="#fff"/><rect x="13" y="12" width="3" height="1" fill="#000"/><rect x="2" y="13" width="1" height="1" fill="#000"/><rect x="3" y="13" width="2" height="1" fill="#fff"/><rect x="5" y="13" width="1" height="1" fill="#000"/><rect x="6" y="13" width="1" height="1" fill="#fff"/><rect x="7" y="13" width="1" height="1" fill="#000"/><rect x="8" y="13" width="1" height="1" fill="#fff"/><rect x="9" y="13" width="1" height="1" fill="#000"/><rect x="10" y="13" width="1" height="1" fill="#fff"/><rect x="11" y="13" width="1" height="1" fill="#000"/><rect x="12" y="13" width="2" height="1" fill="#fff"/><rect x="14" y="13" width="1" height="1" fill="#000"/><rect x="2" y="14" width="1" height="1" fill="#000"/><rect x="3" y="14" width="11" height="1" fill="#fff"/><rect x="14" y="14" width="1" height="1" fill="#000"/><rect x="2" y="15" width="13" height="1" fill="#000"/></svg>
<div class="tx" style="left:214.4px;top:493px;font-size:12.5px;color:#FFFFFF;transform:scaleX(0.875);">173.194.111.109</div>
<div class="tx" style="left:418.75px;top:493px;font-size:12.5px;color:#FFFFFF;transform:scaleX(0.8403);">Host is alive</div>
<div class="tx" style="left:530.43px;top:493px;font-size:12.5px;color:#FFFFFF;transform:scaleX(0.82);">7</div>
<div class="tx" style="left:615.7px;top:493px;font-size:12.5px;color:#FFFFFF;transform:scaleX(0.7714);">5 ms</div>
<div class="tx" style="left:695.5px;top:493px;font-size:12.5px;color:#FFFFFF;transform:scaleX(0.84);">ping (time</div>
<svg style="left:195px;top:507px;" width="16" height="16" viewBox="0 0 16 16" shape-rendering="crispEdges"><rect x="4" y="0" width="9" height="1" fill="#000"/><rect x="4" y="1" width="1" height="1" fill="#000"/><rect x="5" y="1" width="7" height="1" fill="#fff"/><rect x="12" y="1" width="1" height="1" fill="#000"/><rect x="4" y="2" width="1" height="1" fill="#000"/><rect x="5" y="2" width="1" height="1" fill="#fff"/><rect x="6" y="2" width="5" height="1" fill="#000"/><rect x="11" y="2" width="1" height="1" fill="#fff"/><rect x="12" y="2" width="1" height="1" fill="#000"/><rect x="4" y="3" width="1" height="1" fill="#000"/><rect x="5" y="3" width="1" height="1" fill="#fff"/><rect x="6" y="3" width="1" height="1" fill="#000"/><rect x="7" y="3" width="3" height="1" fill="#00FF00"/><rect x="10" y="3" width="1" height="1" fill="#000"/><rect x="11" y="3" width="1" height="1" fill="#fff"/><rect x="12" y="3" width="1" height="1" fill="#000"/><rect x="4" y="4" width="1" height="1" fill="#000"/><rect x="5" y="4" width="1" height="1" fill="#fff"/><rect x="6" y="4" width="1" height="1" fill="#000"/><rect x="7" y="4" width="3" height="1" fill="#00FF00"/><rect x="10" y="4" width="1" height="1" fill="#000"/><rect x="11" y="4" width="1" height="1" fill="#fff"/><rect x="12" y="4" width="1" height="1" fill="#000"/><rect x="4" y="5" width="1" height="1" fill="#000"/><rect x="5" y="5" width="1" height="1" fill="#fff"/><rect x="6" y="5" width="5" height="1" fill="#000"/><rect x="11" y="5" width="1" height="1" fill="#fff"/><rect x="12" y="5" width="1" height="1" fill="#000"/><rect x="4" y="6" width="1" height="1" fill="#000"/><rect x="5" y="6" width="7" height="1" fill="#fff"/><rect x="12" y="6" width="1" height="1" fill="#000"/><rect x="4" y="7" width="9" height="1" fill="#000"/><rect x="1" y="8" width="15" height="1" fill="#000"/><rect x="1" y="9" width="1" height="1" fill="#000"/><rect x="2" y="9" width="1" height="1" fill="#fff"/><rect x="3" y="9" width="1" height="1" fill="#FF0000"/><rect x="4" y="9" width="11" height="1" fill="#fff"/><rect x="15" y="9" width="1" height="1" fill="#000"/><rect x="1" y="10" width="1" height="1" fill="#000"/><rect x="2" y="10" width="1" height="1" fill="#fff"/><rect x="3" y="10" width="1" height="1" fill="#FF0000"/><rect x="4" y="10" width="7" height="1" fill="#fff"/><rect x="11" y="10" width="3" height="1" fill="#000"/><rect x="14" y="10" width="1" height="1" fill="#fff"/><rect x="15" y="10" width="1" height="1" fill="#000"/><rect x="1" y="11" width="1" height="1" fill="#000"/><rect x="2" y="11" width="3" height="1" fill="#fff"/><rect x="5" y="11" width="7" height="1" fill="#000"/><rect x="12" y="11" width="3" height="1" fill="#fff"/><rect x="15" y="11" width="1" height="1" fill="#000"/><rect x="1" y="12" width="4" height="1" fill="#000"/><rect x="5" y="12" width="8" height="1" fill="#fff"/><rect x="13" y="12" width="3" height="1" fill="#000"/><rect x="2" y="13" width="1" height="1" fill="#000"/><rect x="3" y="13" width="2" height="1" fill="#fff"/><rect x="5" y="13" width="1" height="1" fill="#000"/><rect x="6" y="13" width="1" height="1" fill="#fff"/><rect x="7" y="13" width="1" height="1" fill="#000"/><rect x="8" y="13" width="1" height="1" fill="#fff"/><rect x="9" y="13" width="1" height="1" fill="#000"/><rect x="10" y="13" width="1" height="1" fill="#fff"/><rect x="11" y="13" width="1" height="1" fill="#000"/><rect x="12" y="13" width="2" height="1" fill="#fff"/><rect x="14" y="13" width="1" height="1" fill="#000"/><rect x="2" y="14" width="1" height="1" fill="#000"/><rect x="3" y="14" width="11" height="1" fill="#fff"/><rect x="14" y="14" width="1" height="1" fill="#000"/><rect x="2" y="15" width="13" height="1" fill="#000"/></svg>
<div class="tx" style="left:214.4px;top:510px;font-size:12.5px;color:#FFFFFF;transform:scaleX(0.8846);">173.194.111.110</div>
<div class="tx" style="left:418.75px;top:510px;font-size:12.5px;color:#FFFFFF;transform:scaleX(0.8403);">Host is alive</div>
<div class="tx" style="left:530.43px;top:510px;font-size:12.5px;color:#FFFFFF;transform:scaleX(0.82);">7</div>
<div class="tx" style="left:615.7px;top:510px;font-size:12.5px;color:#FFFFFF;transform:scaleX(0.7714);">5 ms</div>
<div class="tx" style="left:695.5px;top:510px;font-size:12.5px;color:#FFFFFF;transform:scaleX(0.84);">ping (time</div>
<div class="a" style="left:734px;top:80px;width:17px;height:435px;background:#F0F0F0;"></div>
<div class="a" style="left:735px;top:98px;width:15px;height:122px;background:#CDCDCD;"></div>
<svg style="left:739px;top:86px;" width="7" height="5" viewBox="0 0 7 5" shape-rendering="crispEdges"><rect x="3" y="0" width="1" height="1" fill="#606060"/><rect x="2" y="1" width="3" height="1" fill="#606060"/><rect x="1" y="2" width="5" height="1" fill="#606060"/><rect x="0" y="3" width="3" height="1" fill="#606060"/><rect x="4" y="3" width="3" height="1" fill="#606060"/><rect x="0" y="4" width="2" height="1" fill="#606060"/><rect x="5" y="4" width="2" height="1" fill="#606060"/></svg>
<svg style="left:739px;top:505px;" width="7" height="5" viewBox="0 0 7 5" shape-rendering="crispEdges"><rect x="0" y="0" width="2" height="1" fill="#606060"/><rect x="5" y="0" width="2" height="1" fill="#606060"/><rect x="0" y="1" width="3" height="1" fill="#606060"/><rect x="4" y="1" width="3" height="1" fill="#606060"/><rect x="1" y="2" width="5" height="1" fill="#606060"/><rect x="2" y="3" width="3" height="1" fill="#606060"/><rect x="3" y="4" width="1" height="1" fill="#606060"/></svg>
<div class="a" style="left:194px;top:515px;width:557px;height:17px;background:#F0F0F0;"></div>
<div class="a" style="left:211px;top:516px;width:136px;height:15px;background:#CDCDCD;"></div>
<svg style="left:199px;top:520px;" width="6" height="7" viewBox="0 0 6 7" shape-rendering="crispEdges"><rect x="4" y="0" width="2" height="1" fill="#606060"/><rect x="3" y="1" width="3" height="1" fill="#606060"/><rect x="2" y="2" width="3" height="1" fill="#606060"/><rect x="1" y="3" width="3" height="1" fill="#606060"/><rect x="2" y="4" width="3" height="1" fill="#606060"/><rect x="3" y="5" width="3" height="1" fill="#606060"/><rect x="4" y="6" width="2" height="1" fill="#606060"/></svg>
<svg style="left:723px;top:520px;" width="6" height="7" viewBox="0 0 6 7" shape-rendering="crispEdges"><rect x="0" y="0" width="2" height="1" fill="#606060"/><rect x="0" y="1" width="3" height="1" fill="#606060"/><rect x="1" y="2" width="3" height="1" fill="#606060"/><rect x="2" y="3" width="3" height="1" fill="#606060"/><rect x="1" y="4" width="3" height="1" fill="#606060"/><rect x="0" y="5" width="3" height="1" fill="#606060"/><rect x="0" y="6" width="2" height="1" fill="#606060"/></svg>
<div class="a" style="left:194px;top:515px;width:540px;height:1px;background:#FFFFFF;"></div>
<div class="a" style="left:751px;top:80px;width:1px;height:453px;background:#E3E3E3;"></div>
<div class="a" style="left:752px;top:79px;width:1px;height:455px;background:#FFFFFF;"></div>
<svg style="left:739px;top:547px;" width="15" height="15" viewBox="0 0 15 15" shape-rendering="crispEdges"><path d="M1.5 14L14 1.5M6.5 14L14 6.5M11.5 14L14 11.5" stroke="#A0A0A0" stroke-width="1.6" shape-rendering="auto"/></svg>
</body></html>
